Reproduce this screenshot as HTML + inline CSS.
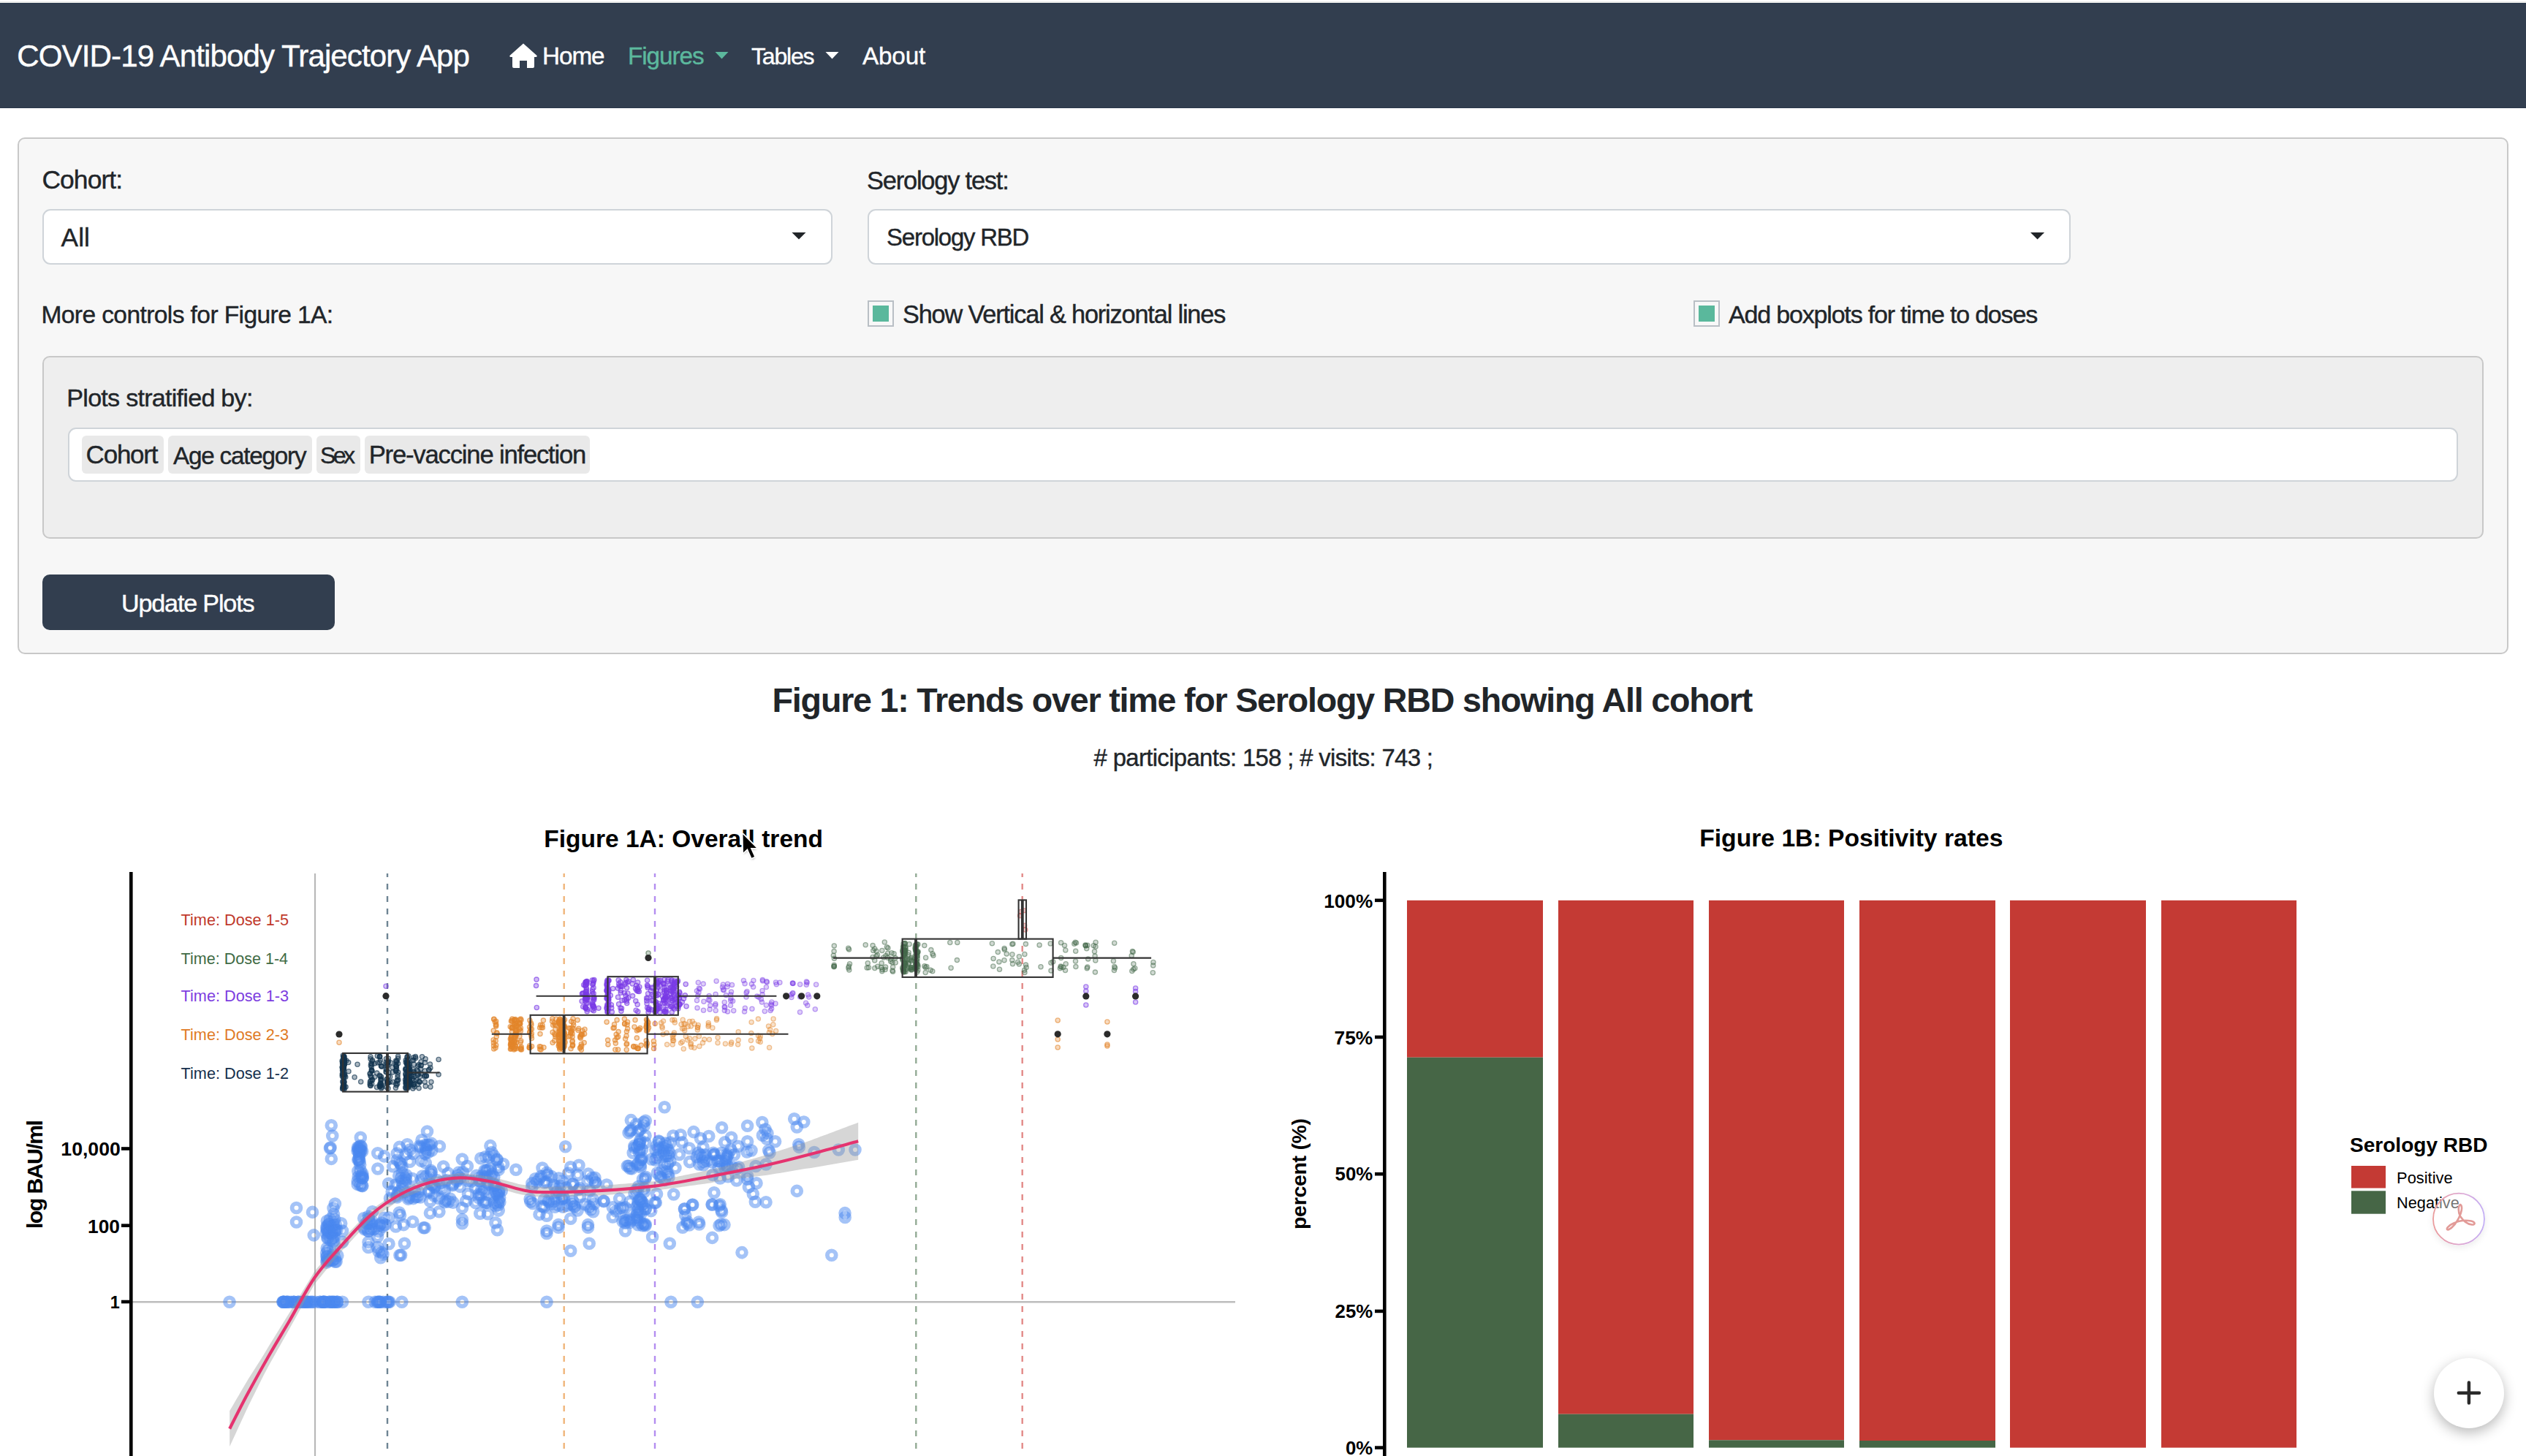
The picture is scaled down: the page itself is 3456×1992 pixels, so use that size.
<!DOCTYPE html>
<html><head><meta charset="utf-8">
<style>
html,body{margin:0;padding:0;}
body{width:3456px;height:1992px;overflow:hidden;background:#fff;position:relative;font-family:"Liberation Sans",sans-serif;}
.a{position:absolute;box-sizing:border-box;}
.t{position:absolute;white-space:nowrap;font-family:"Liberation Sans",sans-serif;}
</style></head><body>
<!-- top strip + navbar -->
<div class="a" style="left:0;top:2px;width:3456px;height:2px;background:#e8e9e7"></div>
<div class="a" style="left:0;top:4px;width:3456px;height:144px;background:#323e4f;border-top:1px solid #24354a;border-bottom:1px solid #2a364a"></div>
<svg class="a" style="left:696px;top:58px" width="40" height="36" viewBox="0 0 40 36">
  <path d="M20 1.5 L38.5 18 Q39.5 19.5 37.5 20 L35 20 L35 33 Q35 35 33 35 L25 35 L25 25 L15 25 L15 35 L7 35 Q5 35 5 33 L5 20 L2.5 20 Q0.5 19.5 1.5 18 Z" fill="#fff"/>
</svg>
<svg class="a" style="left:978px;top:70px" width="20" height="12"><path d="M0.5 1 L18.5 1 L9.5 10.5 Z" fill="#5cb89d"/></svg>
<svg class="a" style="left:1129px;top:70px" width="20" height="12"><path d="M0.5 1 L18.5 1 L9.5 10.5 Z" fill="#fff"/></svg>

<!-- panel -->
<div class="a" style="left:24px;top:188px;width:3408px;height:707px;background:#f7f7f7;border:2px solid #c8c8c8;border-radius:10px"></div>
<div class="a" style="left:58px;top:286px;width:1081px;height:76px;background:#fff;border:2px solid #cfd4d9;border-radius:11px"></div>
<svg class="a" style="left:1080px;top:316px" width="26" height="16"><path d="M3.4 2 L22.5 2 L13 11.6 Z" fill="#212529"/></svg>
<div class="a" style="left:1187px;top:286px;width:1646px;height:76px;background:#fff;border:2px solid #cfd4d9;border-radius:11px"></div>
<svg class="a" style="left:2775px;top:316px" width="26" height="16"><path d="M3 2 L22.1 2 L12.6 11.6 Z" fill="#212529"/></svg>
<div class="a" style="left:1187px;top:411px;width:36px;height:36px;border:2px solid #b9bfc5;background:#f8f8f8"></div>
<div class="a" style="left:1194px;top:418px;width:22px;height:22px;background:#5ab89c"></div>
<div class="a" style="left:2317px;top:411px;width:36px;height:36px;border:2px solid #b9bfc5;background:#f8f8f8"></div>
<div class="a" style="left:2324px;top:418px;width:22px;height:22px;background:#5ab89c"></div>
<div class="a" style="left:58px;top:487px;width:3340px;height:250px;background:#eeeeee;border:2px solid #c8c8c8;border-radius:10px"></div>
<div class="a" style="left:93px;top:585px;width:3270px;height:74px;background:#fff;border:2px solid #cfd4d9;border-radius:11px"></div>
<div class="a" style="left:112px;top:596px;width:112px;height:52px;background:#e9e9e9;border-radius:6px"></div>
<div class="a" style="left:230px;top:596px;width:197px;height:52px;background:#e9e9e9;border-radius:6px"></div>
<div class="a" style="left:433px;top:596px;width:60px;height:52px;background:#e9e9e9;border-radius:6px"></div>
<div class="a" style="left:499px;top:596px;width:308px;height:52px;background:#e9e9e9;border-radius:6px"></div>
<div class="a" style="left:58px;top:786px;width:400px;height:76px;background:#323e4f;border-radius:10px"></div>

<svg class="a" style="left:0;top:0" width="3456" height="1992">
<line x1="431" y1="1195" x2="431" y2="1992" stroke="#b9b9b9" stroke-width="2.2"/>
<line x1="181" y1="1781.3" x2="1690" y2="1781.3" stroke="#bdbdbd" stroke-width="2.5"/>
<line x1="530" y1="1195" x2="530" y2="1985" stroke="#6f8594" stroke-width="2.4" stroke-dasharray="8 9" stroke-dashoffset="3.0"/>
<line x1="771.7" y1="1195" x2="771.7" y2="1985" stroke="#f0b57a" stroke-width="2.4" stroke-dasharray="8 9" stroke-dashoffset="3.0"/>
<line x1="896" y1="1195" x2="896" y2="1985" stroke="#b48ef0" stroke-width="2.4" stroke-dasharray="8 9" stroke-dashoffset="3.0"/>
<line x1="1253.3" y1="1195" x2="1253.3" y2="1985" stroke="#93ab95" stroke-width="2.4" stroke-dasharray="8 9" stroke-dashoffset="3.0"/>
<line x1="1398.7" y1="1195" x2="1398.7" y2="1985" stroke="#e38a88" stroke-width="2.4" stroke-dasharray="8 9" stroke-dashoffset="3.0"/>
<g fill="none" stroke="#4a88f0" stroke-opacity="0.5" stroke-width="5.8">
<circle cx="314.0" cy="1781.3" r="5.9"/>
<circle cx="468.5" cy="1781.3" r="5.9"/>
<circle cx="504.0" cy="1781.3" r="5.9"/>
<circle cx="533.0" cy="1781.3" r="5.9"/>
<circle cx="549.8" cy="1781.3" r="5.9"/>
<circle cx="632.3" cy="1781.3" r="5.9"/>
<circle cx="748.0" cy="1781.3" r="5.9"/>
<circle cx="918.0" cy="1781.3" r="5.9"/>
<circle cx="954.3" cy="1781.3" r="5.9"/>
<circle cx="402.5" cy="1781.3" r="5.9"/>
<circle cx="420.2" cy="1781.3" r="5.9"/>
<circle cx="413.9" cy="1781.3" r="5.9"/>
<circle cx="388.1" cy="1781.3" r="5.9"/>
<circle cx="387.0" cy="1781.3" r="5.9"/>
<circle cx="388.8" cy="1781.3" r="5.9"/>
<circle cx="407.9" cy="1781.3" r="5.9"/>
<circle cx="391.7" cy="1781.3" r="5.9"/>
<circle cx="418.9" cy="1781.3" r="5.9"/>
<circle cx="416.2" cy="1781.3" r="5.9"/>
<circle cx="437.7" cy="1781.3" r="5.9"/>
<circle cx="431.4" cy="1781.3" r="5.9"/>
<circle cx="392.8" cy="1781.3" r="5.9"/>
<circle cx="401.7" cy="1781.3" r="5.9"/>
<circle cx="394.8" cy="1781.3" r="5.9"/>
<circle cx="419.5" cy="1781.3" r="5.9"/>
<circle cx="414.6" cy="1781.3" r="5.9"/>
<circle cx="388.2" cy="1781.3" r="5.9"/>
<circle cx="421.7" cy="1781.3" r="5.9"/>
<circle cx="402.0" cy="1781.3" r="5.9"/>
<circle cx="409.5" cy="1781.3" r="5.9"/>
<circle cx="427.9" cy="1781.3" r="5.9"/>
<circle cx="398.2" cy="1781.3" r="5.9"/>
<circle cx="413.4" cy="1781.3" r="5.9"/>
<circle cx="424.4" cy="1781.3" r="5.9"/>
<circle cx="437.9" cy="1781.3" r="5.9"/>
<circle cx="407.6" cy="1781.3" r="5.9"/>
<circle cx="393.2" cy="1781.3" r="5.9"/>
<circle cx="387.1" cy="1781.3" r="5.9"/>
<circle cx="426.3" cy="1781.3" r="5.9"/>
<circle cx="462.0" cy="1781.3" r="5.9"/>
<circle cx="457.7" cy="1781.3" r="5.9"/>
<circle cx="454.9" cy="1781.3" r="5.9"/>
<circle cx="461.2" cy="1781.3" r="5.9"/>
<circle cx="452.4" cy="1781.3" r="5.9"/>
<circle cx="442.5" cy="1781.3" r="5.9"/>
<circle cx="456.5" cy="1781.3" r="5.9"/>
<circle cx="460.7" cy="1781.3" r="5.9"/>
<circle cx="450.3" cy="1781.3" r="5.9"/>
<circle cx="441.5" cy="1781.3" r="5.9"/>
<circle cx="445.0" cy="1781.3" r="5.9"/>
<circle cx="442.4" cy="1781.3" r="5.9"/>
<circle cx="444.1" cy="1781.3" r="5.9"/>
<circle cx="450.4" cy="1781.3" r="5.9"/>
<circle cx="442.9" cy="1781.3" r="5.9"/>
<circle cx="454.2" cy="1781.3" r="5.9"/>
<circle cx="528.6" cy="1781.3" r="5.9"/>
<circle cx="518.3" cy="1781.3" r="5.9"/>
<circle cx="519.8" cy="1781.3" r="5.9"/>
<circle cx="531.2" cy="1781.3" r="5.9"/>
<circle cx="516.3" cy="1781.3" r="5.9"/>
<circle cx="517.4" cy="1781.3" r="5.9"/>
<circle cx="524.2" cy="1781.3" r="5.9"/>
<circle cx="513.1" cy="1781.3" r="5.9"/>
<circle cx="520.0" cy="1781.3" r="5.9"/>
<circle cx="531.1" cy="1781.3" r="5.9"/>
<circle cx="453.3" cy="1539.7" r="5.9"/>
<circle cx="454.8" cy="1554.0" r="5.9"/>
<circle cx="452.1" cy="1570.0" r="5.9"/>
<circle cx="451.5" cy="1571.0" r="5.9"/>
<circle cx="453.3" cy="1585.4" r="5.9"/>
<circle cx="493.3" cy="1556.3" r="5.9"/>
<circle cx="493.1" cy="1601.2" r="5.9"/>
<circle cx="494.4" cy="1569.1" r="5.9"/>
<circle cx="496.2" cy="1610.5" r="5.9"/>
<circle cx="496.0" cy="1611.5" r="5.9"/>
<circle cx="492.1" cy="1588.7" r="5.9"/>
<circle cx="489.8" cy="1602.2" r="5.9"/>
<circle cx="489.5" cy="1569.8" r="5.9"/>
<circle cx="490.7" cy="1575.3" r="5.9"/>
<circle cx="491.7" cy="1569.0" r="5.9"/>
<circle cx="489.0" cy="1574.6" r="5.9"/>
<circle cx="489.8" cy="1586.7" r="5.9"/>
<circle cx="489.2" cy="1615.8" r="5.9"/>
<circle cx="493.9" cy="1574.5" r="5.9"/>
<circle cx="491.0" cy="1585.8" r="5.9"/>
<circle cx="491.9" cy="1573.0" r="5.9"/>
<circle cx="495.8" cy="1622.6" r="5.9"/>
<circle cx="492.7" cy="1593.6" r="5.9"/>
<circle cx="489.7" cy="1571.8" r="5.9"/>
<circle cx="491.7" cy="1581.1" r="5.9"/>
<circle cx="495.6" cy="1575.2" r="5.9"/>
<circle cx="489.2" cy="1620.2" r="5.9"/>
<circle cx="493.2" cy="1574.4" r="5.9"/>
<circle cx="493.3" cy="1567.5" r="5.9"/>
<circle cx="493.2" cy="1621.8" r="5.9"/>
<circle cx="495.9" cy="1605.7" r="5.9"/>
<circle cx="491.1" cy="1586.9" r="5.9"/>
<circle cx="490.3" cy="1610.0" r="5.9"/>
<circle cx="493.3" cy="1610.4" r="5.9"/>
<circle cx="491.6" cy="1578.7" r="5.9"/>
<circle cx="495.5" cy="1622.1" r="5.9"/>
<circle cx="495.8" cy="1611.9" r="5.9"/>
<circle cx="495.5" cy="1608.2" r="5.9"/>
<circle cx="516.8" cy="1577.7" r="5.9"/>
<circle cx="516.8" cy="1599.0" r="5.9"/>
<circle cx="525.7" cy="1581.9" r="5.9"/>
<circle cx="531.7" cy="1619.3" r="5.9"/>
<circle cx="533.5" cy="1639.5" r="5.9"/>
<circle cx="584.5" cy="1548.0" r="5.9"/>
<circle cx="546.5" cy="1569.4" r="5.9"/>
<circle cx="557.2" cy="1565.8" r="5.9"/>
<circle cx="560.8" cy="1573.0" r="5.9"/>
<circle cx="575.0" cy="1569.4" r="5.9"/>
<circle cx="554.8" cy="1618.0" r="5.9"/>
<circle cx="543.0" cy="1636.0" r="5.9"/>
<circle cx="575.0" cy="1638.0" r="5.9"/>
<circle cx="548.7" cy="1611.7" r="5.9"/>
<circle cx="555.9" cy="1578.9" r="5.9"/>
<circle cx="537.6" cy="1595.7" r="5.9"/>
<circle cx="550.5" cy="1623.4" r="5.9"/>
<circle cx="589.6" cy="1607.0" r="5.9"/>
<circle cx="588.5" cy="1643.2" r="5.9"/>
<circle cx="589.5" cy="1601.4" r="5.9"/>
<circle cx="548.3" cy="1592.2" r="5.9"/>
<circle cx="547.0" cy="1590.7" r="5.9"/>
<circle cx="570.9" cy="1637.3" r="5.9"/>
<circle cx="583.1" cy="1609.1" r="5.9"/>
<circle cx="572.6" cy="1630.6" r="5.9"/>
<circle cx="540.7" cy="1621.3" r="5.9"/>
<circle cx="586.9" cy="1629.4" r="5.9"/>
<circle cx="578.0" cy="1609.0" r="5.9"/>
<circle cx="546.0" cy="1629.9" r="5.9"/>
<circle cx="554.6" cy="1630.7" r="5.9"/>
<circle cx="590.4" cy="1603.5" r="5.9"/>
<circle cx="558.5" cy="1640.4" r="5.9"/>
<circle cx="576.6" cy="1588.4" r="5.9"/>
<circle cx="543.1" cy="1587.1" r="5.9"/>
<circle cx="586.7" cy="1631.0" r="5.9"/>
<circle cx="544.2" cy="1632.4" r="5.9"/>
<circle cx="590.9" cy="1621.0" r="5.9"/>
<circle cx="555.6" cy="1613.8" r="5.9"/>
<circle cx="543.3" cy="1578.0" r="5.9"/>
<circle cx="590.4" cy="1620.5" r="5.9"/>
<circle cx="565.5" cy="1639.6" r="5.9"/>
<circle cx="560.3" cy="1635.4" r="5.9"/>
<circle cx="582.3" cy="1591.1" r="5.9"/>
<circle cx="550.1" cy="1596.6" r="5.9"/>
<circle cx="549.5" cy="1616.3" r="5.9"/>
<circle cx="550.5" cy="1605.1" r="5.9"/>
<circle cx="543.3" cy="1638.0" r="5.9"/>
<circle cx="555.8" cy="1607.7" r="5.9"/>
<circle cx="568.7" cy="1637.6" r="5.9"/>
<circle cx="559.6" cy="1638.5" r="5.9"/>
<circle cx="564.1" cy="1612.6" r="5.9"/>
<circle cx="565.3" cy="1578.3" r="5.9"/>
<circle cx="560.6" cy="1589.3" r="5.9"/>
<circle cx="536.2" cy="1630.5" r="5.9"/>
<circle cx="545.7" cy="1608.7" r="5.9"/>
<circle cx="576.6" cy="1614.3" r="5.9"/>
<circle cx="554.3" cy="1611.7" r="5.9"/>
<circle cx="567.1" cy="1629.5" r="5.9"/>
<circle cx="574.1" cy="1567.7" r="5.9"/>
<circle cx="577.0" cy="1559.8" r="5.9"/>
<circle cx="587.4" cy="1566.2" r="5.9"/>
<circle cx="583.2" cy="1573.3" r="5.9"/>
<circle cx="590.2" cy="1564.4" r="5.9"/>
<circle cx="584.3" cy="1566.2" r="5.9"/>
<circle cx="582.2" cy="1571.4" r="5.9"/>
<circle cx="581.0" cy="1566.9" r="5.9"/>
<circle cx="581.6" cy="1578.4" r="5.9"/>
<circle cx="586.0" cy="1576.5" r="5.9"/>
<circle cx="405.5" cy="1652.5" r="5.9"/>
<circle cx="405.5" cy="1672.0" r="5.9"/>
<circle cx="427.5" cy="1658.4" r="5.9"/>
<circle cx="429.3" cy="1689.9" r="5.9"/>
<circle cx="458.4" cy="1647.0" r="5.9"/>
<circle cx="456.0" cy="1653.0" r="5.9"/>
<circle cx="456.6" cy="1661.4" r="5.9"/>
<circle cx="461.1" cy="1682.8" r="5.9"/>
<circle cx="455.0" cy="1724.5" r="5.9"/>
<circle cx="459.4" cy="1675.4" r="5.9"/>
<circle cx="447.9" cy="1694.0" r="5.9"/>
<circle cx="447.2" cy="1681.7" r="5.9"/>
<circle cx="447.2" cy="1707.8" r="5.9"/>
<circle cx="458.5" cy="1721.7" r="5.9"/>
<circle cx="448.5" cy="1710.7" r="5.9"/>
<circle cx="456.6" cy="1675.7" r="5.9"/>
<circle cx="460.1" cy="1726.0" r="5.9"/>
<circle cx="449.5" cy="1725.1" r="5.9"/>
<circle cx="452.4" cy="1696.7" r="5.9"/>
<circle cx="461.8" cy="1717.8" r="5.9"/>
<circle cx="448.6" cy="1693.3" r="5.9"/>
<circle cx="454.2" cy="1687.7" r="5.9"/>
<circle cx="449.1" cy="1686.4" r="5.9"/>
<circle cx="457.6" cy="1668.2" r="5.9"/>
<circle cx="454.9" cy="1693.9" r="5.9"/>
<circle cx="446.3" cy="1687.2" r="5.9"/>
<circle cx="456.0" cy="1698.2" r="5.9"/>
<circle cx="447.0" cy="1727.1" r="5.9"/>
<circle cx="458.6" cy="1726.3" r="5.9"/>
<circle cx="447.7" cy="1683.2" r="5.9"/>
<circle cx="446.6" cy="1714.5" r="5.9"/>
<circle cx="450.3" cy="1674.9" r="5.9"/>
<circle cx="452.8" cy="1722.6" r="5.9"/>
<circle cx="459.1" cy="1682.8" r="5.9"/>
<circle cx="448.4" cy="1723.1" r="5.9"/>
<circle cx="455.1" cy="1709.7" r="5.9"/>
<circle cx="447.4" cy="1670.5" r="5.9"/>
<circle cx="457.0" cy="1692.9" r="5.9"/>
<circle cx="447.2" cy="1724.2" r="5.9"/>
<circle cx="456.2" cy="1715.9" r="5.9"/>
<circle cx="447.3" cy="1719.2" r="5.9"/>
<circle cx="447.1" cy="1719.6" r="5.9"/>
<circle cx="453.3" cy="1687.7" r="5.9"/>
<circle cx="454.8" cy="1723.5" r="5.9"/>
<circle cx="450.3" cy="1674.9" r="5.9"/>
<circle cx="454.4" cy="1681.5" r="5.9"/>
<circle cx="447.8" cy="1676.8" r="5.9"/>
<circle cx="446.8" cy="1679.3" r="5.9"/>
<circle cx="451.0" cy="1685.6" r="5.9"/>
<circle cx="458.2" cy="1684.7" r="5.9"/>
<circle cx="454.0" cy="1677.9" r="5.9"/>
<circle cx="451.6" cy="1668.1" r="5.9"/>
<circle cx="466.7" cy="1673.8" r="5.9"/>
<circle cx="468.5" cy="1684.0" r="5.9"/>
<circle cx="468.5" cy="1699.4" r="5.9"/>
<circle cx="509.5" cy="1657.8" r="5.9"/>
<circle cx="504.0" cy="1664.3" r="5.9"/>
<circle cx="519.5" cy="1675.6" r="5.9"/>
<circle cx="502.1" cy="1674.0" r="5.9"/>
<circle cx="525.9" cy="1666.2" r="5.9"/>
<circle cx="522.2" cy="1673.1" r="5.9"/>
<circle cx="511.8" cy="1681.5" r="5.9"/>
<circle cx="508.6" cy="1674.6" r="5.9"/>
<circle cx="518.0" cy="1684.6" r="5.9"/>
<circle cx="507.0" cy="1681.5" r="5.9"/>
<circle cx="518.6" cy="1677.4" r="5.9"/>
<circle cx="509.0" cy="1671.3" r="5.9"/>
<circle cx="497.7" cy="1666.7" r="5.9"/>
<circle cx="498.3" cy="1679.6" r="5.9"/>
<circle cx="504.2" cy="1667.4" r="5.9"/>
<circle cx="498.7" cy="1681.7" r="5.9"/>
<circle cx="523.9" cy="1678.1" r="5.9"/>
<circle cx="505.0" cy="1669.1" r="5.9"/>
<circle cx="505.4" cy="1673.6" r="5.9"/>
<circle cx="501.0" cy="1673.4" r="5.9"/>
<circle cx="504.4" cy="1684.2" r="5.9"/>
<circle cx="527.1" cy="1675.5" r="5.9"/>
<circle cx="503.8" cy="1684.3" r="5.9"/>
<circle cx="516.6" cy="1692.0" r="5.9"/>
<circle cx="504.0" cy="1699.4" r="5.9"/>
<circle cx="504.0" cy="1706.5" r="5.9"/>
<circle cx="516.6" cy="1706.5" r="5.9"/>
<circle cx="522.5" cy="1713.6" r="5.9"/>
<circle cx="520.7" cy="1720.8" r="5.9"/>
<circle cx="532.0" cy="1701.8" r="5.9"/>
<circle cx="532.0" cy="1666.0" r="5.9"/>
<circle cx="524.0" cy="1716.0" r="5.9"/>
<circle cx="518.0" cy="1712.0" r="5.9"/>
<circle cx="546.3" cy="1659.0" r="5.9"/>
<circle cx="547.5" cy="1662.6" r="5.9"/>
<circle cx="541.5" cy="1678.0" r="5.9"/>
<circle cx="552.2" cy="1675.6" r="5.9"/>
<circle cx="564.7" cy="1671.5" r="5.9"/>
<circle cx="579.5" cy="1679.8" r="5.9"/>
<circle cx="553.4" cy="1701.2" r="5.9"/>
<circle cx="548.6" cy="1717.2" r="5.9"/>
<circle cx="546.9" cy="1717.2" r="5.9"/>
<circle cx="588.4" cy="1659.6" r="5.9"/>
<circle cx="600.9" cy="1657.8" r="5.9"/>
<circle cx="632.4" cy="1652.5" r="5.9"/>
<circle cx="632.4" cy="1668.5" r="5.9"/>
<circle cx="632.4" cy="1673.8" r="5.9"/>
<circle cx="656.7" cy="1660.2" r="5.9"/>
<circle cx="667.4" cy="1660.8" r="5.9"/>
<circle cx="678.0" cy="1673.0" r="5.9"/>
<circle cx="680.4" cy="1682.8" r="5.9"/>
<circle cx="581.2" cy="1679.8" r="5.9"/>
<circle cx="601.4" cy="1568.2" r="5.9"/>
<circle cx="590.7" cy="1574.0" r="5.9"/>
<circle cx="632.3" cy="1586.0" r="5.9"/>
<circle cx="639.4" cy="1595.5" r="5.9"/>
<circle cx="657.8" cy="1584.8" r="5.9"/>
<circle cx="670.9" cy="1567.6" r="5.9"/>
<circle cx="672.6" cy="1576.5" r="5.9"/>
<circle cx="606.7" cy="1596.0" r="5.9"/>
<circle cx="671.0" cy="1608.5" r="5.9"/>
<circle cx="663.0" cy="1610.4" r="5.9"/>
<circle cx="675.3" cy="1619.7" r="5.9"/>
<circle cx="668.2" cy="1619.9" r="5.9"/>
<circle cx="663.1" cy="1601.3" r="5.9"/>
<circle cx="665.3" cy="1611.8" r="5.9"/>
<circle cx="664.1" cy="1582.7" r="5.9"/>
<circle cx="670.9" cy="1598.9" r="5.9"/>
<circle cx="678.2" cy="1621.7" r="5.9"/>
<circle cx="682.5" cy="1631.6" r="5.9"/>
<circle cx="681.6" cy="1648.7" r="5.9"/>
<circle cx="673.1" cy="1606.1" r="5.9"/>
<circle cx="688.6" cy="1592.5" r="5.9"/>
<circle cx="681.8" cy="1630.5" r="5.9"/>
<circle cx="664.1" cy="1645.3" r="5.9"/>
<circle cx="686.2" cy="1629.3" r="5.9"/>
<circle cx="682.1" cy="1643.5" r="5.9"/>
<circle cx="666.6" cy="1621.3" r="5.9"/>
<circle cx="676.1" cy="1645.3" r="5.9"/>
<circle cx="683.9" cy="1644.6" r="5.9"/>
<circle cx="678.2" cy="1649.7" r="5.9"/>
<circle cx="680.8" cy="1634.4" r="5.9"/>
<circle cx="669.0" cy="1583.4" r="5.9"/>
<circle cx="666.5" cy="1608.8" r="5.9"/>
<circle cx="665.7" cy="1645.4" r="5.9"/>
<circle cx="677.5" cy="1629.3" r="5.9"/>
<circle cx="679.3" cy="1633.4" r="5.9"/>
<circle cx="675.7" cy="1581.3" r="5.9"/>
<circle cx="683.7" cy="1638.6" r="5.9"/>
<circle cx="676.1" cy="1622.2" r="5.9"/>
<circle cx="680.1" cy="1586.1" r="5.9"/>
<circle cx="682.2" cy="1600.4" r="5.9"/>
<circle cx="664.9" cy="1601.4" r="5.9"/>
<circle cx="682.0" cy="1596.8" r="5.9"/>
<circle cx="682.2" cy="1656.1" r="5.9"/>
<circle cx="675.8" cy="1610.5" r="5.9"/>
<circle cx="675.5" cy="1633.6" r="5.9"/>
<circle cx="682.9" cy="1628.5" r="5.9"/>
<circle cx="679.7" cy="1587.0" r="5.9"/>
<circle cx="666.8" cy="1600.6" r="5.9"/>
<circle cx="645.3" cy="1616.4" r="5.9"/>
<circle cx="633.2" cy="1603.5" r="5.9"/>
<circle cx="598.2" cy="1614.8" r="5.9"/>
<circle cx="640.4" cy="1633.5" r="5.9"/>
<circle cx="640.6" cy="1615.8" r="5.9"/>
<circle cx="629.6" cy="1623.4" r="5.9"/>
<circle cx="626.2" cy="1608.2" r="5.9"/>
<circle cx="655.7" cy="1611.8" r="5.9"/>
<circle cx="661.5" cy="1644.2" r="5.9"/>
<circle cx="595.2" cy="1623.2" r="5.9"/>
<circle cx="650.6" cy="1645.6" r="5.9"/>
<circle cx="625.0" cy="1614.8" r="5.9"/>
<circle cx="608.5" cy="1644.6" r="5.9"/>
<circle cx="608.5" cy="1628.6" r="5.9"/>
<circle cx="603.8" cy="1626.1" r="5.9"/>
<circle cx="659.7" cy="1608.8" r="5.9"/>
<circle cx="650.6" cy="1625.4" r="5.9"/>
<circle cx="655.2" cy="1633.9" r="5.9"/>
<circle cx="610.0" cy="1642.5" r="5.9"/>
<circle cx="627.5" cy="1604.1" r="5.9"/>
<circle cx="594.2" cy="1624.6" r="5.9"/>
<circle cx="625.1" cy="1616.3" r="5.9"/>
<circle cx="603.7" cy="1618.1" r="5.9"/>
<circle cx="615.8" cy="1640.0" r="5.9"/>
<circle cx="594.1" cy="1636.0" r="5.9"/>
<circle cx="651.9" cy="1608.3" r="5.9"/>
<circle cx="657.9" cy="1634.4" r="5.9"/>
<circle cx="656.2" cy="1615.8" r="5.9"/>
<circle cx="619.7" cy="1620.3" r="5.9"/>
<circle cx="662.9" cy="1628.9" r="5.9"/>
<circle cx="618.9" cy="1621.8" r="5.9"/>
<circle cx="613.0" cy="1605.1" r="5.9"/>
<circle cx="601.0" cy="1639.7" r="5.9"/>
<circle cx="613.7" cy="1644.2" r="5.9"/>
<circle cx="611.2" cy="1614.7" r="5.9"/>
<circle cx="629.3" cy="1611.4" r="5.9"/>
<circle cx="619.8" cy="1645.1" r="5.9"/>
<circle cx="655.0" cy="1638.7" r="5.9"/>
<circle cx="637.5" cy="1643.2" r="5.9"/>
<circle cx="658.9" cy="1627.2" r="5.9"/>
<circle cx="705.9" cy="1600.3" r="5.9"/>
<circle cx="742.0" cy="1598.0" r="5.9"/>
<circle cx="748.0" cy="1604.4" r="5.9"/>
<circle cx="727.9" cy="1624.0" r="5.9"/>
<circle cx="773.6" cy="1568.8" r="5.9"/>
<circle cx="780.7" cy="1596.7" r="5.9"/>
<circle cx="792.0" cy="1594.3" r="5.9"/>
<circle cx="790.4" cy="1607.5" r="5.9"/>
<circle cx="791.6" cy="1627.5" r="5.9"/>
<circle cx="793.5" cy="1637.2" r="5.9"/>
<circle cx="749.2" cy="1607.4" r="5.9"/>
<circle cx="810.0" cy="1611.4" r="5.9"/>
<circle cx="766.9" cy="1622.2" r="5.9"/>
<circle cx="750.3" cy="1642.0" r="5.9"/>
<circle cx="814.7" cy="1618.0" r="5.9"/>
<circle cx="784.3" cy="1620.0" r="5.9"/>
<circle cx="774.9" cy="1624.7" r="5.9"/>
<circle cx="737.9" cy="1613.1" r="5.9"/>
<circle cx="741.7" cy="1650.3" r="5.9"/>
<circle cx="769.2" cy="1616.0" r="5.9"/>
<circle cx="808.1" cy="1654.8" r="5.9"/>
<circle cx="764.7" cy="1612.0" r="5.9"/>
<circle cx="740.3" cy="1609.5" r="5.9"/>
<circle cx="754.5" cy="1609.6" r="5.9"/>
<circle cx="744.7" cy="1617.9" r="5.9"/>
<circle cx="776.1" cy="1649.4" r="5.9"/>
<circle cx="793.2" cy="1625.6" r="5.9"/>
<circle cx="761.3" cy="1631.2" r="5.9"/>
<circle cx="757.8" cy="1621.9" r="5.9"/>
<circle cx="727.9" cy="1618.9" r="5.9"/>
<circle cx="813.9" cy="1611.3" r="5.9"/>
<circle cx="769.8" cy="1636.5" r="5.9"/>
<circle cx="804.0" cy="1615.8" r="5.9"/>
<circle cx="747.7" cy="1617.4" r="5.9"/>
<circle cx="760.0" cy="1627.3" r="5.9"/>
<circle cx="812.6" cy="1647.4" r="5.9"/>
<circle cx="804.9" cy="1606.1" r="5.9"/>
<circle cx="725.1" cy="1640.5" r="5.9"/>
<circle cx="807.1" cy="1628.7" r="5.9"/>
<circle cx="777.8" cy="1605.0" r="5.9"/>
<circle cx="759.2" cy="1651.3" r="5.9"/>
<circle cx="800.4" cy="1647.8" r="5.9"/>
<circle cx="814.4" cy="1617.4" r="5.9"/>
<circle cx="732.4" cy="1612.7" r="5.9"/>
<circle cx="771.6" cy="1639.1" r="5.9"/>
<circle cx="811.4" cy="1641.1" r="5.9"/>
<circle cx="783.5" cy="1643.2" r="5.9"/>
<circle cx="765.4" cy="1632.6" r="5.9"/>
<circle cx="725.8" cy="1644.1" r="5.9"/>
<circle cx="744.1" cy="1651.0" r="5.9"/>
<circle cx="783.3" cy="1620.2" r="5.9"/>
<circle cx="734.2" cy="1617.6" r="5.9"/>
<circle cx="770.2" cy="1651.2" r="5.9"/>
<circle cx="744.5" cy="1641.1" r="5.9"/>
<circle cx="764.7" cy="1649.3" r="5.9"/>
<circle cx="758.0" cy="1643.6" r="5.9"/>
<circle cx="768.5" cy="1640.2" r="5.9"/>
<circle cx="753.8" cy="1647.4" r="5.9"/>
<circle cx="786.0" cy="1650.3" r="5.9"/>
<circle cx="782.3" cy="1647.6" r="5.9"/>
<circle cx="750.5" cy="1644.0" r="5.9"/>
<circle cx="786.1" cy="1651.3" r="5.9"/>
<circle cx="830.0" cy="1621.0" r="5.9"/>
<circle cx="826.0" cy="1643.0" r="5.9"/>
<circle cx="863.3" cy="1532.6" r="5.9"/>
<circle cx="863.8" cy="1545.9" r="5.9"/>
<circle cx="868.0" cy="1632.7" r="5.9"/>
<circle cx="866.2" cy="1577.2" r="5.9"/>
<circle cx="871.7" cy="1666.0" r="5.9"/>
<circle cx="862.0" cy="1547.5" r="5.9"/>
<circle cx="864.4" cy="1598.9" r="5.9"/>
<circle cx="872.0" cy="1569.3" r="5.9"/>
<circle cx="874.5" cy="1641.3" r="5.9"/>
<circle cx="868.1" cy="1570.3" r="5.9"/>
<circle cx="878.3" cy="1584.5" r="5.9"/>
<circle cx="875.0" cy="1573.7" r="5.9"/>
<circle cx="861.9" cy="1644.1" r="5.9"/>
<circle cx="863.5" cy="1669.6" r="5.9"/>
<circle cx="867.9" cy="1567.9" r="5.9"/>
<circle cx="861.9" cy="1598.5" r="5.9"/>
<circle cx="871.6" cy="1669.2" r="5.9"/>
<circle cx="860.2" cy="1595.3" r="5.9"/>
<circle cx="861.7" cy="1672.6" r="5.9"/>
<circle cx="860.1" cy="1549.9" r="5.9"/>
<circle cx="858.3" cy="1595.3" r="5.9"/>
<circle cx="876.8" cy="1660.5" r="5.9"/>
<circle cx="873.1" cy="1675.7" r="5.9"/>
<circle cx="877.5" cy="1586.8" r="5.9"/>
<circle cx="861.1" cy="1667.5" r="5.9"/>
<circle cx="873.4" cy="1547.2" r="5.9"/>
<circle cx="871.6" cy="1593.4" r="5.9"/>
<circle cx="729.0" cy="1646.5" r="5.9"/>
<circle cx="738.0" cy="1661.4" r="5.9"/>
<circle cx="748.0" cy="1663.2" r="5.9"/>
<circle cx="748.0" cy="1684.0" r="5.9"/>
<circle cx="748.0" cy="1687.5" r="5.9"/>
<circle cx="764.0" cy="1675.6" r="5.9"/>
<circle cx="764.0" cy="1679.2" r="5.9"/>
<circle cx="780.7" cy="1667.3" r="5.9"/>
<circle cx="790.2" cy="1656.0" r="5.9"/>
<circle cx="804.5" cy="1675.6" r="5.9"/>
<circle cx="804.5" cy="1679.2" r="5.9"/>
<circle cx="806.2" cy="1650.7" r="5.9"/>
<circle cx="811.6" cy="1657.8" r="5.9"/>
<circle cx="826.0" cy="1643.6" r="5.9"/>
<circle cx="838.3" cy="1651.9" r="5.9"/>
<circle cx="838.3" cy="1665.0" r="5.9"/>
<circle cx="852.0" cy="1671.0" r="5.9"/>
<circle cx="855.5" cy="1684.0" r="5.9"/>
<circle cx="879.3" cy="1676.8" r="5.9"/>
<circle cx="780.7" cy="1711.3" r="5.9"/>
<circle cx="806.2" cy="1701.2" r="5.9"/>
<circle cx="855.6" cy="1651.9" r="5.9"/>
<circle cx="847.6" cy="1640.1" r="5.9"/>
<circle cx="851.9" cy="1652.7" r="5.9"/>
<circle cx="878.3" cy="1644.5" r="5.9"/>
<circle cx="878.6" cy="1647.5" r="5.9"/>
<circle cx="854.9" cy="1669.6" r="5.9"/>
<circle cx="873.1" cy="1655.6" r="5.9"/>
<circle cx="842.9" cy="1657.0" r="5.9"/>
<circle cx="855.5" cy="1673.1" r="5.9"/>
<circle cx="848.5" cy="1653.1" r="5.9"/>
<circle cx="876.0" cy="1641.1" r="5.9"/>
<circle cx="857.0" cy="1669.2" r="5.9"/>
<circle cx="909.2" cy="1514.8" r="5.9"/>
<circle cx="880.7" cy="1535.3" r="5.9"/>
<circle cx="870.5" cy="1538.1" r="5.9"/>
<circle cx="882.9" cy="1563.4" r="5.9"/>
<circle cx="880.5" cy="1646.8" r="5.9"/>
<circle cx="874.7" cy="1565.4" r="5.9"/>
<circle cx="883.4" cy="1610.2" r="5.9"/>
<circle cx="873.7" cy="1623.2" r="5.9"/>
<circle cx="874.4" cy="1565.8" r="5.9"/>
<circle cx="870.1" cy="1628.2" r="5.9"/>
<circle cx="882.8" cy="1612.4" r="5.9"/>
<circle cx="883.2" cy="1533.2" r="5.9"/>
<circle cx="873.3" cy="1591.8" r="5.9"/>
<circle cx="883.4" cy="1654.0" r="5.9"/>
<circle cx="875.4" cy="1562.6" r="5.9"/>
<circle cx="876.0" cy="1594.2" r="5.9"/>
<circle cx="883.0" cy="1553.8" r="5.9"/>
<circle cx="881.2" cy="1626.0" r="5.9"/>
<circle cx="881.5" cy="1630.5" r="5.9"/>
<circle cx="878.5" cy="1572.6" r="5.9"/>
<circle cx="874.5" cy="1577.0" r="5.9"/>
<circle cx="881.0" cy="1540.3" r="5.9"/>
<circle cx="872.8" cy="1627.9" r="5.9"/>
<circle cx="901.3" cy="1561.0" r="5.9"/>
<circle cx="896.7" cy="1587.1" r="5.9"/>
<circle cx="903.0" cy="1609.9" r="5.9"/>
<circle cx="915.0" cy="1610.3" r="5.9"/>
<circle cx="901.7" cy="1562.0" r="5.9"/>
<circle cx="898.1" cy="1584.2" r="5.9"/>
<circle cx="911.3" cy="1581.4" r="5.9"/>
<circle cx="901.0" cy="1579.8" r="5.9"/>
<circle cx="909.3" cy="1593.6" r="5.9"/>
<circle cx="912.1" cy="1602.8" r="5.9"/>
<circle cx="910.3" cy="1564.0" r="5.9"/>
<circle cx="914.1" cy="1573.2" r="5.9"/>
<circle cx="908.2" cy="1577.5" r="5.9"/>
<circle cx="911.9" cy="1568.2" r="5.9"/>
<circle cx="901.3" cy="1570.6" r="5.9"/>
<circle cx="899.3" cy="1604.8" r="5.9"/>
<circle cx="908.4" cy="1575.0" r="5.9"/>
<circle cx="904.5" cy="1610.6" r="5.9"/>
<circle cx="906.9" cy="1569.9" r="5.9"/>
<circle cx="913.4" cy="1592.5" r="5.9"/>
<circle cx="917.3" cy="1563.0" r="5.9"/>
<circle cx="906.2" cy="1601.3" r="5.9"/>
<circle cx="914.1" cy="1606.4" r="5.9"/>
<circle cx="896.9" cy="1573.2" r="5.9"/>
<circle cx="898.6" cy="1567.6" r="5.9"/>
<circle cx="916.9" cy="1588.7" r="5.9"/>
<circle cx="916.0" cy="1577.4" r="5.9"/>
<circle cx="914.6" cy="1581.5" r="5.9"/>
<circle cx="876.0" cy="1545.6" r="5.9"/>
<circle cx="876.0" cy="1560.0" r="5.9"/>
<circle cx="876.5" cy="1587.0" r="5.9"/>
<circle cx="876.5" cy="1596.7" r="5.9"/>
<circle cx="879.5" cy="1613.3" r="5.9"/>
<circle cx="891.4" cy="1586.0" r="5.9"/>
<circle cx="909.2" cy="1614.5" r="5.9"/>
<circle cx="921.7" cy="1634.0" r="5.9"/>
<circle cx="898.5" cy="1633.5" r="5.9"/>
<circle cx="897.3" cy="1645.4" r="5.9"/>
<circle cx="921.0" cy="1554.0" r="5.9"/>
<circle cx="931.2" cy="1552.8" r="5.9"/>
<circle cx="933.0" cy="1562.9" r="5.9"/>
<circle cx="949.0" cy="1548.6" r="5.9"/>
<circle cx="958.5" cy="1557.5" r="5.9"/>
<circle cx="969.8" cy="1554.5" r="5.9"/>
<circle cx="943.0" cy="1571.0" r="5.9"/>
<circle cx="929.4" cy="1579.5" r="5.9"/>
<circle cx="943.6" cy="1589.6" r="5.9"/>
<circle cx="924.0" cy="1597.9" r="5.9"/>
<circle cx="956.7" cy="1593.0" r="5.9"/>
<circle cx="962.0" cy="1569.4" r="5.9"/>
<circle cx="962.4" cy="1593.7" r="5.9"/>
<circle cx="987.0" cy="1577.5" r="5.9"/>
<circle cx="974.5" cy="1589.9" r="5.9"/>
<circle cx="960.8" cy="1583.8" r="5.9"/>
<circle cx="958.1" cy="1579.9" r="5.9"/>
<circle cx="962.2" cy="1589.4" r="5.9"/>
<circle cx="976.5" cy="1579.9" r="5.9"/>
<circle cx="953.4" cy="1582.9" r="5.9"/>
<circle cx="977.4" cy="1579.4" r="5.9"/>
<circle cx="964.2" cy="1579.9" r="5.9"/>
<circle cx="981.6" cy="1588.2" r="5.9"/>
<circle cx="955.3" cy="1577.4" r="5.9"/>
<circle cx="967.2" cy="1588.2" r="5.9"/>
<circle cx="976.0" cy="1577.2" r="5.9"/>
<circle cx="987.6" cy="1542.7" r="5.9"/>
<circle cx="1022.6" cy="1540.3" r="5.9"/>
<circle cx="1042.8" cy="1535.5" r="5.9"/>
<circle cx="1050.0" cy="1550.4" r="5.9"/>
<circle cx="1043.4" cy="1553.3" r="5.9"/>
<circle cx="1060.6" cy="1561.7" r="5.9"/>
<circle cx="1022.6" cy="1561.7" r="5.9"/>
<circle cx="1000.6" cy="1556.3" r="5.9"/>
<circle cx="991.7" cy="1562.9" r="5.9"/>
<circle cx="1010.0" cy="1568.2" r="5.9"/>
<circle cx="1028.0" cy="1574.0" r="5.9"/>
<circle cx="1022.0" cy="1576.0" r="5.9"/>
<circle cx="1000.0" cy="1573.0" r="5.9"/>
<circle cx="1051.7" cy="1574.0" r="5.9"/>
<circle cx="1053.0" cy="1577.0" r="5.9"/>
<circle cx="1047.0" cy="1545.0" r="5.9"/>
<circle cx="1049.0" cy="1558.0" r="5.9"/>
<circle cx="987.8" cy="1591.7" r="5.9"/>
<circle cx="995.1" cy="1581.8" r="5.9"/>
<circle cx="992.1" cy="1597.9" r="5.9"/>
<circle cx="992.2" cy="1588.6" r="5.9"/>
<circle cx="993.5" cy="1585.0" r="5.9"/>
<circle cx="1008.5" cy="1598.9" r="5.9"/>
<circle cx="993.7" cy="1579.7" r="5.9"/>
<circle cx="1004.5" cy="1579.9" r="5.9"/>
<circle cx="983.2" cy="1596.6" r="5.9"/>
<circle cx="995.5" cy="1594.7" r="5.9"/>
<circle cx="995.0" cy="1596.2" r="5.9"/>
<circle cx="996.6" cy="1578.9" r="5.9"/>
<circle cx="983.4" cy="1588.2" r="5.9"/>
<circle cx="1001.9" cy="1596.8" r="5.9"/>
<circle cx="1086.7" cy="1530.8" r="5.9"/>
<circle cx="1099.8" cy="1535.0" r="5.9"/>
<circle cx="1090.3" cy="1542.0" r="5.9"/>
<circle cx="1092.7" cy="1565.8" r="5.9"/>
<circle cx="1093.3" cy="1569.4" r="5.9"/>
<circle cx="1114.0" cy="1576.5" r="5.9"/>
<circle cx="1147.3" cy="1573.0" r="5.9"/>
<circle cx="1170.0" cy="1573.0" r="5.9"/>
<circle cx="1034.0" cy="1595.5" r="5.9"/>
<circle cx="1048.0" cy="1593.0" r="5.9"/>
<circle cx="1010.7" cy="1596.7" r="5.9"/>
<circle cx="975.0" cy="1607.4" r="5.9"/>
<circle cx="985.2" cy="1612.0" r="5.9"/>
<circle cx="996.0" cy="1609.8" r="5.9"/>
<circle cx="1007.8" cy="1615.0" r="5.9"/>
<circle cx="1022.6" cy="1608.6" r="5.9"/>
<circle cx="1022.6" cy="1613.3" r="5.9"/>
<circle cx="1035.0" cy="1618.7" r="5.9"/>
<circle cx="1024.4" cy="1624.0" r="5.9"/>
<circle cx="1030.3" cy="1633.5" r="5.9"/>
<circle cx="1033.3" cy="1644.2" r="5.9"/>
<circle cx="1048.0" cy="1644.8" r="5.9"/>
<circle cx="977.0" cy="1631.7" r="5.9"/>
<circle cx="974.0" cy="1647.8" r="5.9"/>
<circle cx="985.2" cy="1647.8" r="5.9"/>
<circle cx="987.0" cy="1656.0" r="5.9"/>
<circle cx="947.2" cy="1648.4" r="5.9"/>
<circle cx="936.5" cy="1653.7" r="5.9"/>
<circle cx="1090.3" cy="1629.4" r="5.9"/>
<circle cx="1156.0" cy="1659.6" r="5.9"/>
<circle cx="896.0" cy="1645.3" r="5.9"/>
<circle cx="890.8" cy="1656.6" r="5.9"/>
<circle cx="883.0" cy="1676.8" r="5.9"/>
<circle cx="892.6" cy="1692.3" r="5.9"/>
<circle cx="916.3" cy="1701.2" r="5.9"/>
<circle cx="936.5" cy="1654.3" r="5.9"/>
<circle cx="937.7" cy="1662.6" r="5.9"/>
<circle cx="940.0" cy="1673.8" r="5.9"/>
<circle cx="934.0" cy="1679.2" r="5.9"/>
<circle cx="956.7" cy="1675.0" r="5.9"/>
<circle cx="947.8" cy="1648.3" r="5.9"/>
<circle cx="974.5" cy="1648.3" r="5.9"/>
<circle cx="984.0" cy="1649.5" r="5.9"/>
<circle cx="987.6" cy="1658.4" r="5.9"/>
<circle cx="986.4" cy="1675.0" r="5.9"/>
<circle cx="991.0" cy="1675.6" r="5.9"/>
<circle cx="984.0" cy="1676.8" r="5.9"/>
<circle cx="974.5" cy="1693.4" r="5.9"/>
<circle cx="1015.0" cy="1713.6" r="5.9"/>
<circle cx="1156.2" cy="1665.5" r="5.9"/>
<circle cx="1137.8" cy="1717.2" r="5.9"/>
<circle cx="940.0" cy="1671.0" r="5.9"/>
<circle cx="943.0" cy="1676.0" r="5.9"/>
<circle cx="956.0" cy="1672.0" r="5.9"/>
<circle cx="871.2" cy="1662.4" r="5.9"/>
<circle cx="875.2" cy="1658.2" r="5.9"/>
<circle cx="872.0" cy="1650.2" r="5.9"/>
<circle cx="877.3" cy="1673.3" r="5.9"/>
<circle cx="871.5" cy="1657.7" r="5.9"/>
<circle cx="881.3" cy="1674.8" r="5.9"/>
<circle cx="872.8" cy="1644.6" r="5.9"/>
<circle cx="883.2" cy="1675.1" r="5.9"/>
<circle cx="876.8" cy="1641.9" r="5.9"/>
<circle cx="883.0" cy="1654.0" r="5.9"/>
</g>
<path d="M314.2,1930.3 L318.5,1923.0 L322.8,1915.6 L327.1,1908.2 L331.4,1900.8 L335.7,1893.4 L340.0,1886.2 L344.3,1879.5 L348.6,1872.7 L352.9,1866.0 L357.2,1859.2 L361.5,1852.2 L365.8,1844.9 L370.1,1837.8 L374.4,1830.9 L378.7,1823.9 L383.0,1817.0 L387.3,1810.1 L391.6,1803.1 L395.9,1796.2 L400.2,1789.2 L404.5,1782.2 L408.8,1775.1 L413.1,1768.1 L417.4,1761.1 L421.7,1754.0 L426.0,1746.7 L430.3,1739.4 L434.6,1734.3 L438.9,1729.3 L443.2,1724.3 L447.5,1719.2 L451.8,1714.2 L456.1,1709.2 L460.4,1704.1 L464.7,1699.1 L469.0,1694.6 L473.3,1690.2 L477.6,1685.8 L481.9,1681.4 L486.2,1677.0 L490.5,1672.5 L494.8,1668.1 L499.1,1663.7 L503.4,1659.3 L507.7,1655.1 L512.0,1652.2 L516.3,1649.2 L520.6,1646.2 L524.9,1643.2 L529.2,1640.2 L533.5,1637.2 L537.8,1634.2 L542.1,1631.3 L546.4,1628.3 L550.7,1626.1 L555.0,1624.4 L559.3,1622.7 L563.6,1621.0 L567.9,1619.3 L572.2,1617.6 L576.5,1615.9 L580.8,1614.2 L585.1,1612.5 L589.4,1610.9 L593.7,1610.3 L598.0,1609.6 L602.3,1609.0 L606.6,1608.3 L610.9,1607.7 L615.2,1607.0 L619.5,1606.4 L623.8,1605.7 L628.1,1605.0 L632.4,1605.0 L636.7,1605.5 L641.0,1606.0 L645.3,1606.5 L649.6,1607.1 L653.9,1607.6 L658.2,1608.1 L662.5,1608.7 L666.8,1609.2 L671.1,1609.7 L675.4,1610.8 L679.7,1611.9 L684.0,1613.1 L688.3,1614.2 L692.6,1615.3 L696.9,1616.5 L701.2,1617.6 L705.5,1618.7 L709.8,1619.9 L714.1,1620.8 L718.4,1621.3 L722.7,1621.8 L727.0,1622.3 L731.3,1622.9 L735.6,1623.4 L739.9,1623.9 L744.2,1623.9 L748.5,1623.8 L752.8,1623.7 L757.1,1623.6 L761.4,1623.5 L765.7,1623.4 L770.0,1623.3 L774.3,1623.2 L778.6,1623.1 L782.9,1623.0 L787.2,1622.9 L791.5,1622.8 L795.8,1622.7 L800.1,1622.6 L804.4,1622.5 L808.7,1622.4 L813.0,1622.3 L817.3,1622.2 L821.6,1622.1 L825.9,1621.9 L830.2,1621.5 L834.5,1621.1 L838.8,1620.8 L843.1,1620.4 L847.4,1620.1 L851.7,1619.7 L856.0,1619.4 L860.3,1619.0 L864.6,1618.7 L868.9,1618.3 L873.2,1617.9 L877.5,1617.6 L881.8,1617.2 L886.1,1616.9 L890.4,1616.5 L894.7,1616.2 L899.0,1615.5 L903.3,1614.7 L907.6,1613.8 L911.9,1612.9 L916.2,1612.0 L920.5,1611.1 L924.8,1610.2 L929.1,1609.3 L933.4,1608.4 L937.7,1607.6 L942.0,1606.7 L946.3,1605.8 L950.6,1604.9 L954.9,1604.0 L959.2,1603.1 L963.5,1602.2 L967.8,1601.3 L972.1,1600.3 L976.4,1599.3 L980.7,1598.3 L985.0,1597.3 L989.3,1596.3 L993.6,1595.2 L997.9,1594.2 L1002.2,1593.1 L1006.5,1591.9 L1010.8,1590.7 L1015.1,1589.5 L1019.4,1588.3 L1023.7,1587.1 L1028.0,1585.9 L1032.3,1584.7 L1036.6,1583.5 L1040.9,1582.3 L1045.2,1581.0 L1049.5,1579.8 L1053.8,1578.5 L1058.1,1577.0 L1062.4,1575.6 L1066.7,1574.2 L1071.0,1572.8 L1075.3,1571.4 L1079.6,1570.0 L1083.9,1568.6 L1088.2,1567.2 L1092.5,1565.7 L1096.8,1564.3 L1101.1,1562.9 L1105.4,1561.4 L1109.7,1559.9 L1114.0,1558.3 L1118.3,1556.7 L1122.6,1555.1 L1126.9,1553.5 L1131.2,1551.9 L1135.5,1550.3 L1139.8,1548.7 L1144.1,1547.1 L1148.4,1545.4 L1152.7,1543.8 L1157.0,1542.2 L1161.3,1540.6 L1165.6,1539.0 L1169.9,1537.4 L1174.2,1535.8 L1174.2,1586.8 L1169.9,1587.6 L1165.6,1588.3 L1161.3,1589.0 L1157.0,1589.8 L1152.7,1590.5 L1148.4,1591.3 L1144.1,1592.0 L1139.8,1592.7 L1135.5,1593.5 L1131.2,1594.2 L1126.9,1595.0 L1122.6,1595.7 L1118.3,1596.4 L1114.0,1597.2 L1109.7,1597.9 L1105.4,1598.5 L1101.1,1599.1 L1096.8,1599.8 L1092.5,1600.5 L1088.2,1601.3 L1083.9,1602.0 L1079.6,1602.7 L1075.3,1603.4 L1071.0,1604.2 L1066.7,1604.9 L1062.4,1605.6 L1058.1,1606.3 L1053.8,1607.1 L1049.5,1607.8 L1045.2,1608.3 L1040.9,1608.8 L1036.6,1609.3 L1032.3,1609.8 L1028.0,1610.4 L1023.7,1610.9 L1019.4,1611.4 L1015.1,1611.9 L1010.8,1612.4 L1006.5,1613.0 L1002.2,1613.5 L997.9,1614.1 L993.6,1614.8 L989.3,1615.5 L985.0,1616.2 L980.7,1616.9 L976.4,1617.6 L972.1,1618.4 L967.8,1619.1 L963.5,1619.7 L959.2,1620.3 L954.9,1620.8 L950.6,1621.4 L946.3,1622.0 L942.0,1622.6 L937.7,1623.2 L933.4,1623.8 L929.1,1624.4 L924.8,1625.0 L920.5,1625.6 L916.2,1626.1 L911.9,1626.7 L907.6,1627.3 L903.3,1627.9 L899.0,1628.5 L894.7,1629.2 L890.4,1629.6 L886.1,1630.0 L881.8,1630.4 L877.5,1630.7 L873.2,1631.1 L868.9,1631.5 L864.6,1631.9 L860.3,1632.3 L856.0,1632.7 L851.7,1633.0 L847.4,1633.4 L843.1,1633.8 L838.8,1634.2 L834.5,1634.6 L830.2,1635.0 L825.9,1635.3 L821.6,1635.6 L817.3,1635.7 L813.0,1635.9 L808.7,1636.0 L804.4,1636.1 L800.1,1636.3 L795.8,1636.4 L791.5,1636.5 L787.2,1636.6 L782.9,1636.8 L778.6,1636.9 L774.3,1637.0 L770.0,1637.2 L765.7,1637.3 L761.4,1637.4 L757.1,1637.5 L752.8,1637.7 L748.5,1637.8 L744.2,1637.9 L739.9,1637.8 L735.6,1637.3 L731.3,1636.7 L727.0,1636.2 L722.7,1635.6 L718.4,1635.1 L714.1,1634.6 L709.8,1633.6 L705.5,1632.4 L701.2,1631.3 L696.9,1630.1 L692.6,1628.9 L688.3,1627.8 L684.0,1626.6 L679.7,1625.5 L675.4,1624.3 L671.1,1623.2 L666.8,1622.6 L662.5,1622.1 L658.2,1621.5 L653.9,1621.0 L649.6,1620.4 L645.3,1619.8 L641.0,1619.3 L636.7,1618.7 L632.4,1618.2 L628.1,1618.2 L623.8,1618.9 L619.5,1619.5 L615.2,1620.1 L610.9,1620.7 L606.6,1621.4 L602.3,1622.0 L598.0,1622.7 L593.7,1623.3 L589.4,1624.0 L585.1,1625.6 L580.8,1627.4 L576.5,1629.1 L572.2,1630.9 L567.9,1632.6 L563.6,1634.4 L559.3,1636.1 L555.0,1637.9 L550.7,1639.6 L546.4,1641.8 L542.1,1644.8 L537.8,1647.9 L533.5,1650.9 L529.2,1653.9 L524.9,1657.0 L520.6,1660.0 L516.3,1663.0 L512.0,1666.0 L507.7,1669.1 L503.4,1673.2 L499.1,1677.8 L494.8,1682.4 L490.5,1687.0 L486.2,1691.6 L481.9,1696.3 L477.6,1700.9 L473.3,1705.5 L469.0,1710.1 L464.7,1714.8 L460.4,1720.1 L456.1,1725.3 L451.8,1730.6 L447.5,1735.9 L443.2,1741.1 L438.9,1746.4 L434.6,1751.6 L430.3,1756.9 L426.0,1764.4 L421.7,1771.9 L417.4,1779.5 L413.1,1787.3 L408.8,1795.0 L404.5,1802.8 L400.2,1810.5 L395.9,1818.2 L391.6,1825.9 L387.3,1833.5 L383.0,1841.2 L378.7,1848.8 L374.4,1856.5 L370.1,1864.1 L365.8,1871.9 L361.5,1880.0 L357.2,1888.5 L352.9,1897.2 L348.6,1905.9 L344.3,1914.6 L340.0,1923.3 L335.7,1932.4 L331.4,1941.7 L327.1,1951.0 L322.8,1960.4 L318.5,1969.7 L314.2,1979.1 Z" fill="#999999" fill-opacity="0.4"/>
<path d="M314.2,1954.7 C318.2,1946.9 329.3,1924.5 338.2,1908.0 C347.1,1891.5 357.6,1872.7 367.3,1855.7 C377.0,1838.7 386.0,1824.2 396.5,1806.2 C407.0,1788.2 418.9,1764.7 430.4,1748.0 C441.9,1731.3 452.8,1720.2 465.5,1706.0 C478.2,1691.8 493.0,1674.8 506.7,1662.8 C520.4,1650.8 534.2,1641.5 547.9,1634.0 C561.6,1626.5 575.3,1621.3 589.0,1617.5 C602.7,1613.7 616.5,1611.5 630.3,1611.3 C644.0,1611.1 657.8,1613.8 671.5,1616.5 C685.2,1619.2 701.1,1625.1 712.7,1627.5 C724.3,1629.9 722.5,1630.8 741.0,1631.0 C759.5,1631.2 797.8,1630.2 823.6,1628.8 C849.4,1627.4 871.7,1625.7 895.7,1622.6 C919.7,1619.5 942.1,1615.0 967.8,1610.2 C993.5,1605.4 1026.0,1599.0 1050.0,1593.7 C1074.0,1588.4 1091.3,1583.7 1112.0,1578.3 C1132.7,1572.9 1163.8,1564.1 1174.2,1561.3" fill="none" stroke="#e5336f" stroke-width="4.2" stroke-linecap="butt"/>
<g fill="#12344f" fill-opacity="0.35" stroke="#12344f" stroke-opacity="0.65" stroke-width="1.3">
<circle cx="471.5" cy="1472.5" r="3.1"/>
<circle cx="471.2" cy="1451.4" r="3.1"/>
<circle cx="471.0" cy="1454.2" r="3.1"/>
<circle cx="469.7" cy="1482.9" r="3.1"/>
<circle cx="471.2" cy="1452.4" r="3.1"/>
<circle cx="469.0" cy="1462.4" r="3.1"/>
<circle cx="470.1" cy="1461.6" r="3.1"/>
<circle cx="468.6" cy="1455.4" r="3.1"/>
<circle cx="470.8" cy="1485.3" r="3.1"/>
<circle cx="468.3" cy="1469.9" r="3.1"/>
<circle cx="470.9" cy="1445.8" r="3.1"/>
<circle cx="471.2" cy="1449.4" r="3.1"/>
<circle cx="470.4" cy="1469.3" r="3.1"/>
<circle cx="470.5" cy="1458.1" r="3.1"/>
<circle cx="469.7" cy="1470.8" r="3.1"/>
<circle cx="469.7" cy="1474.3" r="3.1"/>
<circle cx="469.8" cy="1464.2" r="3.1"/>
<circle cx="468.3" cy="1472.5" r="3.1"/>
<circle cx="470.0" cy="1454.8" r="3.1"/>
<circle cx="470.9" cy="1479.9" r="3.1"/>
<circle cx="469.8" cy="1452.3" r="3.1"/>
<circle cx="469.9" cy="1448.9" r="3.1"/>
<circle cx="468.7" cy="1463.8" r="3.1"/>
<circle cx="468.5" cy="1464.3" r="3.1"/>
<circle cx="470.0" cy="1445.9" r="3.1"/>
<circle cx="470.5" cy="1447.8" r="3.1"/>
<circle cx="470.8" cy="1479.8" r="3.1"/>
<circle cx="470.0" cy="1446.5" r="3.1"/>
<circle cx="470.0" cy="1461.4" r="3.1"/>
<circle cx="471.6" cy="1450.3" r="3.1"/>
<circle cx="471.3" cy="1489.8" r="3.1"/>
<circle cx="470.8" cy="1481.5" r="3.1"/>
<circle cx="468.9" cy="1489.2" r="3.1"/>
<circle cx="470.0" cy="1488.0" r="3.1"/>
<circle cx="471.5" cy="1451.6" r="3.1"/>
<circle cx="471.0" cy="1486.8" r="3.1"/>
<circle cx="468.4" cy="1460.1" r="3.1"/>
<circle cx="470.9" cy="1451.3" r="3.1"/>
<circle cx="471.4" cy="1456.6" r="3.1"/>
<circle cx="471.1" cy="1450.6" r="3.1"/>
<circle cx="470.0" cy="1486.3" r="3.1"/>
<circle cx="468.9" cy="1456.1" r="3.1"/>
<circle cx="470.0" cy="1458.7" r="3.1"/>
<circle cx="468.3" cy="1452.4" r="3.1"/>
<circle cx="468.8" cy="1487.1" r="3.1"/>
<circle cx="470.6" cy="1485.2" r="3.1"/>
<circle cx="468.8" cy="1480.1" r="3.1"/>
<circle cx="468.6" cy="1468.4" r="3.1"/>
<circle cx="470.5" cy="1460.5" r="3.1"/>
<circle cx="471.3" cy="1469.5" r="3.1"/>
<circle cx="470.3" cy="1484.6" r="3.1"/>
<circle cx="468.6" cy="1489.7" r="3.1"/>
<circle cx="470.5" cy="1462.1" r="3.1"/>
<circle cx="471.1" cy="1456.2" r="3.1"/>
<circle cx="471.8" cy="1470.6" r="3.1"/>
<circle cx="469.5" cy="1479.2" r="3.1"/>
<circle cx="469.8" cy="1452.1" r="3.1"/>
<circle cx="470.9" cy="1446.2" r="3.1"/>
<circle cx="471.2" cy="1455.7" r="3.1"/>
<circle cx="470.5" cy="1489.3" r="3.1"/>
<circle cx="470.3" cy="1474.5" r="3.1"/>
<circle cx="469.3" cy="1444.1" r="3.1"/>
<circle cx="468.3" cy="1450.9" r="3.1"/>
<circle cx="470.4" cy="1463.9" r="3.1"/>
<circle cx="470.0" cy="1485.2" r="3.1"/>
<circle cx="468.7" cy="1454.5" r="3.1"/>
<circle cx="470.6" cy="1445.0" r="3.1"/>
<circle cx="468.2" cy="1460.3" r="3.1"/>
<circle cx="468.6" cy="1460.4" r="3.1"/>
<circle cx="469.0" cy="1470.8" r="3.1"/>
<circle cx="476.7" cy="1453.4" r="3.1"/>
<circle cx="477.0" cy="1465.8" r="3.1"/>
<circle cx="473.1" cy="1487.1" r="3.1"/>
<circle cx="473.9" cy="1450.9" r="3.1"/>
<circle cx="472.8" cy="1473.4" r="3.1"/>
<circle cx="493.7" cy="1480.0" r="3.1"/>
<circle cx="489.0" cy="1456.2" r="3.1"/>
<circle cx="485.1" cy="1473.7" r="3.1"/>
<circle cx="508.2" cy="1460.1" r="3.1"/>
<circle cx="508.5" cy="1464.4" r="3.1"/>
<circle cx="509.6" cy="1477.7" r="3.1"/>
<circle cx="507.1" cy="1485.6" r="3.1"/>
<circle cx="506.4" cy="1468.5" r="3.1"/>
<circle cx="507.7" cy="1454.9" r="3.1"/>
<circle cx="506.4" cy="1479.8" r="3.1"/>
<circle cx="506.2" cy="1469.3" r="3.1"/>
<circle cx="509.6" cy="1450.5" r="3.1"/>
<circle cx="506.9" cy="1472.0" r="3.1"/>
<circle cx="508.0" cy="1473.5" r="3.1"/>
<circle cx="509.1" cy="1452.0" r="3.1"/>
<circle cx="507.3" cy="1457.8" r="3.1"/>
<circle cx="506.4" cy="1484.9" r="3.1"/>
<circle cx="509.0" cy="1476.9" r="3.1"/>
<circle cx="506.2" cy="1482.8" r="3.1"/>
<circle cx="508.9" cy="1465.4" r="3.1"/>
<circle cx="508.9" cy="1464.8" r="3.1"/>
<circle cx="507.0" cy="1448.8" r="3.1"/>
<circle cx="507.0" cy="1445.8" r="3.1"/>
<circle cx="507.4" cy="1478.5" r="3.1"/>
<circle cx="508.7" cy="1482.9" r="3.1"/>
<circle cx="508.8" cy="1456.2" r="3.1"/>
<circle cx="508.2" cy="1464.1" r="3.1"/>
<circle cx="515.7" cy="1468.1" r="3.1"/>
<circle cx="512.6" cy="1473.5" r="3.1"/>
<circle cx="516.8" cy="1454.0" r="3.1"/>
<circle cx="516.3" cy="1444.7" r="3.1"/>
<circle cx="512.6" cy="1454.9" r="3.1"/>
<circle cx="515.5" cy="1487.5" r="3.1"/>
<circle cx="521.9" cy="1459.0" r="3.1"/>
<circle cx="522.4" cy="1459.1" r="3.1"/>
<circle cx="520.1" cy="1485.7" r="3.1"/>
<circle cx="521.5" cy="1475.9" r="3.1"/>
<circle cx="521.6" cy="1489.0" r="3.1"/>
<circle cx="520.9" cy="1482.6" r="3.1"/>
<circle cx="521.7" cy="1483.4" r="3.1"/>
<circle cx="520.8" cy="1477.3" r="3.1"/>
<circle cx="521.3" cy="1458.2" r="3.1"/>
<circle cx="520.0" cy="1472.6" r="3.1"/>
<circle cx="519.5" cy="1485.9" r="3.1"/>
<circle cx="519.7" cy="1445.2" r="3.1"/>
<circle cx="519.6" cy="1486.7" r="3.1"/>
<circle cx="520.4" cy="1450.5" r="3.1"/>
<circle cx="519.3" cy="1445.9" r="3.1"/>
<circle cx="521.7" cy="1473.2" r="3.1"/>
<circle cx="521.7" cy="1477.9" r="3.1"/>
<circle cx="519.4" cy="1471.2" r="3.1"/>
<circle cx="520.5" cy="1481.6" r="3.1"/>
<circle cx="522.2" cy="1485.0" r="3.1"/>
<circle cx="519.4" cy="1483.9" r="3.1"/>
<circle cx="522.5" cy="1487.4" r="3.1"/>
<circle cx="519.6" cy="1453.5" r="3.1"/>
<circle cx="519.6" cy="1445.6" r="3.1"/>
<circle cx="531.4" cy="1481.4" r="3.1"/>
<circle cx="530.5" cy="1482.0" r="3.1"/>
<circle cx="530.5" cy="1457.2" r="3.1"/>
<circle cx="528.4" cy="1448.5" r="3.1"/>
<circle cx="531.0" cy="1453.4" r="3.1"/>
<circle cx="529.3" cy="1463.5" r="3.1"/>
<circle cx="528.1" cy="1455.8" r="3.1"/>
<circle cx="529.1" cy="1476.9" r="3.1"/>
<circle cx="529.5" cy="1458.8" r="3.1"/>
<circle cx="531.9" cy="1467.2" r="3.1"/>
<circle cx="531.4" cy="1472.4" r="3.1"/>
<circle cx="528.1" cy="1463.0" r="3.1"/>
<circle cx="529.7" cy="1479.6" r="3.1"/>
<circle cx="529.4" cy="1476.4" r="3.1"/>
<circle cx="530.2" cy="1454.0" r="3.1"/>
<circle cx="531.4" cy="1448.2" r="3.1"/>
<circle cx="531.3" cy="1451.8" r="3.1"/>
<circle cx="528.0" cy="1453.3" r="3.1"/>
<circle cx="531.0" cy="1489.0" r="3.1"/>
<circle cx="528.0" cy="1466.6" r="3.1"/>
<circle cx="530.0" cy="1480.7" r="3.1"/>
<circle cx="528.7" cy="1466.8" r="3.1"/>
<circle cx="529.4" cy="1482.3" r="3.1"/>
<circle cx="529.0" cy="1487.4" r="3.1"/>
<circle cx="534.7" cy="1453.9" r="3.1"/>
<circle cx="537.2" cy="1466.9" r="3.1"/>
<circle cx="533.7" cy="1473.3" r="3.1"/>
<circle cx="533.5" cy="1480.2" r="3.1"/>
<circle cx="537.2" cy="1480.2" r="3.1"/>
<circle cx="536.8" cy="1460.4" r="3.1"/>
<circle cx="542.6" cy="1462.2" r="3.1"/>
<circle cx="544.6" cy="1448.0" r="3.1"/>
<circle cx="544.6" cy="1445.2" r="3.1"/>
<circle cx="541.8" cy="1456.1" r="3.1"/>
<circle cx="544.6" cy="1467.1" r="3.1"/>
<circle cx="542.5" cy="1484.7" r="3.1"/>
<circle cx="541.9" cy="1465.2" r="3.1"/>
<circle cx="543.1" cy="1478.7" r="3.1"/>
<circle cx="544.0" cy="1473.7" r="3.1"/>
<circle cx="542.4" cy="1459.0" r="3.1"/>
<circle cx="541.6" cy="1482.8" r="3.1"/>
<circle cx="543.6" cy="1478.1" r="3.1"/>
<circle cx="541.7" cy="1464.2" r="3.1"/>
<circle cx="544.1" cy="1470.6" r="3.1"/>
<circle cx="541.5" cy="1465.3" r="3.1"/>
<circle cx="544.5" cy="1454.9" r="3.1"/>
<circle cx="541.8" cy="1457.9" r="3.1"/>
<circle cx="543.8" cy="1482.8" r="3.1"/>
<circle cx="541.6" cy="1451.2" r="3.1"/>
<circle cx="542.0" cy="1459.0" r="3.1"/>
<circle cx="543.1" cy="1451.4" r="3.1"/>
<circle cx="542.3" cy="1452.7" r="3.1"/>
<circle cx="544.9" cy="1477.5" r="3.1"/>
<circle cx="541.4" cy="1488.3" r="3.1"/>
<circle cx="555.2" cy="1461.7" r="3.1"/>
<circle cx="561.4" cy="1480.6" r="3.1"/>
<circle cx="559.6" cy="1464.0" r="3.1"/>
<circle cx="555.9" cy="1473.3" r="3.1"/>
<circle cx="555.2" cy="1453.5" r="3.1"/>
<circle cx="557.2" cy="1445.6" r="3.1"/>
<circle cx="557.3" cy="1480.4" r="3.1"/>
<circle cx="559.4" cy="1467.0" r="3.1"/>
<circle cx="558.9" cy="1465.3" r="3.1"/>
<circle cx="555.5" cy="1471.8" r="3.1"/>
<circle cx="557.3" cy="1478.1" r="3.1"/>
<circle cx="560.9" cy="1463.8" r="3.1"/>
<circle cx="558.5" cy="1478.5" r="3.1"/>
<circle cx="557.4" cy="1454.5" r="3.1"/>
<circle cx="559.6" cy="1484.5" r="3.1"/>
<circle cx="559.9" cy="1476.2" r="3.1"/>
<circle cx="560.5" cy="1475.3" r="3.1"/>
<circle cx="559.0" cy="1464.9" r="3.1"/>
<circle cx="556.7" cy="1472.9" r="3.1"/>
<circle cx="555.2" cy="1463.3" r="3.1"/>
<circle cx="560.0" cy="1476.8" r="3.1"/>
<circle cx="558.9" cy="1455.5" r="3.1"/>
<circle cx="557.5" cy="1464.9" r="3.1"/>
<circle cx="558.9" cy="1462.8" r="3.1"/>
<circle cx="559.2" cy="1486.8" r="3.1"/>
<circle cx="555.8" cy="1474.1" r="3.1"/>
<circle cx="559.9" cy="1461.9" r="3.1"/>
<circle cx="557.9" cy="1488.8" r="3.1"/>
<circle cx="554.8" cy="1469.0" r="3.1"/>
<circle cx="555.6" cy="1480.0" r="3.1"/>
<circle cx="561.1" cy="1467.9" r="3.1"/>
<circle cx="555.2" cy="1470.4" r="3.1"/>
<circle cx="558.3" cy="1477.0" r="3.1"/>
<circle cx="558.1" cy="1473.4" r="3.1"/>
<circle cx="560.3" cy="1468.0" r="3.1"/>
<circle cx="557.4" cy="1487.6" r="3.1"/>
<circle cx="556.0" cy="1475.5" r="3.1"/>
<circle cx="557.2" cy="1479.1" r="3.1"/>
<circle cx="555.4" cy="1489.3" r="3.1"/>
<circle cx="557.0" cy="1446.6" r="3.1"/>
<circle cx="556.4" cy="1462.4" r="3.1"/>
<circle cx="554.6" cy="1463.3" r="3.1"/>
<circle cx="557.4" cy="1476.1" r="3.1"/>
<circle cx="557.0" cy="1456.2" r="3.1"/>
<circle cx="556.1" cy="1478.1" r="3.1"/>
<circle cx="561.1" cy="1468.2" r="3.1"/>
<circle cx="556.0" cy="1480.9" r="3.1"/>
<circle cx="557.2" cy="1453.8" r="3.1"/>
<circle cx="555.4" cy="1479.7" r="3.1"/>
<circle cx="560.2" cy="1473.2" r="3.1"/>
<circle cx="557.8" cy="1469.9" r="3.1"/>
<circle cx="556.1" cy="1488.3" r="3.1"/>
<circle cx="557.0" cy="1473.4" r="3.1"/>
<circle cx="560.2" cy="1481.5" r="3.1"/>
<circle cx="557.8" cy="1457.5" r="3.1"/>
<circle cx="558.3" cy="1449.8" r="3.1"/>
<circle cx="560.3" cy="1460.3" r="3.1"/>
<circle cx="560.5" cy="1456.3" r="3.1"/>
<circle cx="557.1" cy="1455.7" r="3.1"/>
<circle cx="557.5" cy="1452.6" r="3.1"/>
<circle cx="554.5" cy="1477.2" r="3.1"/>
<circle cx="556.5" cy="1455.3" r="3.1"/>
<circle cx="556.6" cy="1466.1" r="3.1"/>
<circle cx="557.5" cy="1473.3" r="3.1"/>
<circle cx="559.1" cy="1460.7" r="3.1"/>
<circle cx="561.0" cy="1483.3" r="3.1"/>
<circle cx="554.9" cy="1482.1" r="3.1"/>
<circle cx="560.8" cy="1480.1" r="3.1"/>
<circle cx="555.5" cy="1482.2" r="3.1"/>
<circle cx="558.9" cy="1444.7" r="3.1"/>
<circle cx="554.6" cy="1487.8" r="3.1"/>
<circle cx="559.1" cy="1455.5" r="3.1"/>
<circle cx="555.2" cy="1450.6" r="3.1"/>
<circle cx="556.1" cy="1479.7" r="3.1"/>
<circle cx="556.9" cy="1451.0" r="3.1"/>
<circle cx="560.8" cy="1480.4" r="3.1"/>
<circle cx="555.7" cy="1485.0" r="3.1"/>
<circle cx="558.8" cy="1479.9" r="3.1"/>
<circle cx="559.2" cy="1485.1" r="3.1"/>
<circle cx="560.0" cy="1482.6" r="3.1"/>
<circle cx="564.2" cy="1475.9" r="3.1"/>
<circle cx="566.2" cy="1478.1" r="3.1"/>
<circle cx="565.6" cy="1484.6" r="3.1"/>
<circle cx="566.3" cy="1456.2" r="3.1"/>
<circle cx="564.4" cy="1450.4" r="3.1"/>
<circle cx="566.0" cy="1446.7" r="3.1"/>
<circle cx="565.8" cy="1450.6" r="3.1"/>
<circle cx="565.9" cy="1466.9" r="3.1"/>
<circle cx="566.2" cy="1483.7" r="3.1"/>
<circle cx="563.0" cy="1482.7" r="3.1"/>
<circle cx="565.8" cy="1469.9" r="3.1"/>
<circle cx="567.0" cy="1482.7" r="3.1"/>
<circle cx="565.2" cy="1463.3" r="3.1"/>
<circle cx="568.8" cy="1447.5" r="3.1"/>
<circle cx="566.8" cy="1473.3" r="3.1"/>
<circle cx="563.2" cy="1472.0" r="3.1"/>
<circle cx="567.1" cy="1486.8" r="3.1"/>
<circle cx="565.0" cy="1489.2" r="3.1"/>
<circle cx="566.1" cy="1466.3" r="3.1"/>
<circle cx="568.4" cy="1445.6" r="3.1"/>
<circle cx="574.7" cy="1472.8" r="3.1"/>
<circle cx="571.7" cy="1483.6" r="3.1"/>
<circle cx="571.9" cy="1465.8" r="3.1"/>
<circle cx="573.2" cy="1479.4" r="3.1"/>
<circle cx="570.7" cy="1464.0" r="3.1"/>
<circle cx="572.4" cy="1469.5" r="3.1"/>
<circle cx="575.6" cy="1457.5" r="3.1"/>
<circle cx="575.6" cy="1462.6" r="3.1"/>
<circle cx="573.0" cy="1456.5" r="3.1"/>
<circle cx="573.1" cy="1488.8" r="3.1"/>
<circle cx="574.2" cy="1480.4" r="3.1"/>
<circle cx="571.6" cy="1458.6" r="3.1"/>
<circle cx="571.4" cy="1471.0" r="3.1"/>
<circle cx="574.1" cy="1480.1" r="3.1"/>
<circle cx="569.3" cy="1477.2" r="3.1"/>
<circle cx="576.1" cy="1469.1" r="3.1"/>
<circle cx="576.4" cy="1457.8" r="3.1"/>
<circle cx="576.0" cy="1452.7" r="3.1"/>
<circle cx="583.4" cy="1472.0" r="3.1"/>
<circle cx="581.3" cy="1480.3" r="3.1"/>
<circle cx="583.3" cy="1472.1" r="3.1"/>
<circle cx="580.9" cy="1472.8" r="3.1"/>
<circle cx="581.6" cy="1471.4" r="3.1"/>
<circle cx="581.4" cy="1453.8" r="3.1"/>
<circle cx="581.3" cy="1465.1" r="3.1"/>
<circle cx="582.1" cy="1448.7" r="3.1"/>
<circle cx="577.5" cy="1445.7" r="3.1"/>
<circle cx="582.2" cy="1486.0" r="3.1"/>
<circle cx="588.9" cy="1461.0" r="3.1"/>
<circle cx="589.9" cy="1480.2" r="3.1"/>
<circle cx="588.4" cy="1455.9" r="3.1"/>
<circle cx="586.8" cy="1463.4" r="3.1"/>
<circle cx="586.9" cy="1463.8" r="3.1"/>
<circle cx="588.9" cy="1487.0" r="3.1"/>
<circle cx="600.1" cy="1470.1" r="3.1"/>
<circle cx="600.1" cy="1449.5" r="3.1"/>
</g>
<g fill="#e3862b" fill-opacity="0.35" stroke="#e3862b" stroke-opacity="0.65" stroke-width="1.3">
<circle cx="679.2" cy="1418.2" r="3.1"/>
<circle cx="679.7" cy="1412.7" r="3.1"/>
<circle cx="675.2" cy="1410.1" r="3.1"/>
<circle cx="678.1" cy="1433.6" r="3.1"/>
<circle cx="680.0" cy="1413.9" r="3.1"/>
<circle cx="677.2" cy="1398.0" r="3.1"/>
<circle cx="678.3" cy="1402.7" r="3.1"/>
<circle cx="675.9" cy="1394.3" r="3.1"/>
<circle cx="675.1" cy="1422.8" r="3.1"/>
<circle cx="675.7" cy="1434.9" r="3.1"/>
<circle cx="675.5" cy="1430.7" r="3.1"/>
<circle cx="675.7" cy="1394.4" r="3.1"/>
<circle cx="678.7" cy="1403.9" r="3.1"/>
<circle cx="678.8" cy="1401.6" r="3.1"/>
<circle cx="675.4" cy="1426.7" r="3.1"/>
<circle cx="678.7" cy="1430.1" r="3.1"/>
<circle cx="678.7" cy="1397.2" r="3.1"/>
<circle cx="678.2" cy="1423.9" r="3.1"/>
<circle cx="699.9" cy="1433.4" r="3.1"/>
<circle cx="699.1" cy="1434.8" r="3.1"/>
<circle cx="700.8" cy="1394.1" r="3.1"/>
<circle cx="698.3" cy="1421.4" r="3.1"/>
<circle cx="701.1" cy="1397.0" r="3.1"/>
<circle cx="699.3" cy="1424.7" r="3.1"/>
<circle cx="698.8" cy="1430.4" r="3.1"/>
<circle cx="700.0" cy="1396.2" r="3.1"/>
<circle cx="699.5" cy="1418.2" r="3.1"/>
<circle cx="699.8" cy="1422.5" r="3.1"/>
<circle cx="698.7" cy="1427.6" r="3.1"/>
<circle cx="699.5" cy="1421.1" r="3.1"/>
<circle cx="700.5" cy="1411.4" r="3.1"/>
<circle cx="699.6" cy="1427.2" r="3.1"/>
<circle cx="701.6" cy="1427.1" r="3.1"/>
<circle cx="700.2" cy="1406.1" r="3.1"/>
<circle cx="698.4" cy="1435.2" r="3.1"/>
<circle cx="700.7" cy="1428.9" r="3.1"/>
<circle cx="699.4" cy="1419.5" r="3.1"/>
<circle cx="701.7" cy="1429.1" r="3.1"/>
<circle cx="700.4" cy="1406.8" r="3.1"/>
<circle cx="699.7" cy="1431.5" r="3.1"/>
<circle cx="699.6" cy="1422.8" r="3.1"/>
<circle cx="700.4" cy="1431.9" r="3.1"/>
<circle cx="701.1" cy="1405.7" r="3.1"/>
<circle cx="698.2" cy="1404.8" r="3.1"/>
<circle cx="699.7" cy="1418.6" r="3.1"/>
<circle cx="701.1" cy="1431.5" r="3.1"/>
<circle cx="698.4" cy="1429.2" r="3.1"/>
<circle cx="701.1" cy="1430.6" r="3.1"/>
<circle cx="700.3" cy="1405.3" r="3.1"/>
<circle cx="701.3" cy="1428.1" r="3.1"/>
<circle cx="700.7" cy="1432.6" r="3.1"/>
<circle cx="699.4" cy="1397.2" r="3.1"/>
<circle cx="700.2" cy="1427.6" r="3.1"/>
<circle cx="703.9" cy="1425.6" r="3.1"/>
<circle cx="706.6" cy="1403.6" r="3.1"/>
<circle cx="705.4" cy="1422.5" r="3.1"/>
<circle cx="704.9" cy="1402.4" r="3.1"/>
<circle cx="704.1" cy="1425.7" r="3.1"/>
<circle cx="706.0" cy="1413.2" r="3.1"/>
<circle cx="703.5" cy="1428.0" r="3.1"/>
<circle cx="706.0" cy="1403.5" r="3.1"/>
<circle cx="705.3" cy="1431.9" r="3.1"/>
<circle cx="706.4" cy="1415.9" r="3.1"/>
<circle cx="704.9" cy="1418.8" r="3.1"/>
<circle cx="703.9" cy="1401.8" r="3.1"/>
<circle cx="703.9" cy="1423.5" r="3.1"/>
<circle cx="704.5" cy="1417.7" r="3.1"/>
<circle cx="704.6" cy="1415.7" r="3.1"/>
<circle cx="703.7" cy="1395.5" r="3.1"/>
<circle cx="706.8" cy="1409.6" r="3.1"/>
<circle cx="703.6" cy="1420.6" r="3.1"/>
<circle cx="706.0" cy="1400.3" r="3.1"/>
<circle cx="705.3" cy="1408.3" r="3.1"/>
<circle cx="705.1" cy="1394.5" r="3.1"/>
<circle cx="703.3" cy="1435.9" r="3.1"/>
<circle cx="706.3" cy="1414.4" r="3.1"/>
<circle cx="705.2" cy="1404.8" r="3.1"/>
<circle cx="706.0" cy="1411.8" r="3.1"/>
<circle cx="706.6" cy="1426.4" r="3.1"/>
<circle cx="706.1" cy="1434.7" r="3.1"/>
<circle cx="704.1" cy="1395.2" r="3.1"/>
<circle cx="703.9" cy="1401.3" r="3.1"/>
<circle cx="703.5" cy="1395.8" r="3.1"/>
<circle cx="705.2" cy="1430.8" r="3.1"/>
<circle cx="704.8" cy="1434.0" r="3.1"/>
<circle cx="706.5" cy="1396.3" r="3.1"/>
<circle cx="705.4" cy="1410.6" r="3.1"/>
<circle cx="703.6" cy="1434.6" r="3.1"/>
<circle cx="710.9" cy="1417.7" r="3.1"/>
<circle cx="712.3" cy="1434.4" r="3.1"/>
<circle cx="712.4" cy="1410.4" r="3.1"/>
<circle cx="711.6" cy="1400.4" r="3.1"/>
<circle cx="713.5" cy="1435.9" r="3.1"/>
<circle cx="710.8" cy="1395.2" r="3.1"/>
<circle cx="710.9" cy="1408.6" r="3.1"/>
<circle cx="713.2" cy="1432.2" r="3.1"/>
<circle cx="713.0" cy="1395.6" r="3.1"/>
<circle cx="712.8" cy="1423.9" r="3.1"/>
<circle cx="712.3" cy="1435.7" r="3.1"/>
<circle cx="710.2" cy="1399.8" r="3.1"/>
<circle cx="712.7" cy="1433.7" r="3.1"/>
<circle cx="712.4" cy="1406.4" r="3.1"/>
<circle cx="712.1" cy="1426.0" r="3.1"/>
<circle cx="710.4" cy="1407.4" r="3.1"/>
<circle cx="710.9" cy="1398.9" r="3.1"/>
<circle cx="711.7" cy="1400.8" r="3.1"/>
<circle cx="710.9" cy="1399.7" r="3.1"/>
<circle cx="712.4" cy="1394.1" r="3.1"/>
<circle cx="726.9" cy="1401.9" r="3.1"/>
<circle cx="724.1" cy="1433.2" r="3.1"/>
<circle cx="724.9" cy="1433.5" r="3.1"/>
<circle cx="727.5" cy="1431.5" r="3.1"/>
<circle cx="724.6" cy="1412.7" r="3.1"/>
<circle cx="724.4" cy="1433.3" r="3.1"/>
<circle cx="727.4" cy="1420.4" r="3.1"/>
<circle cx="725.8" cy="1408.1" r="3.1"/>
<circle cx="727.3" cy="1414.0" r="3.1"/>
<circle cx="726.5" cy="1399.7" r="3.1"/>
<circle cx="724.9" cy="1396.0" r="3.1"/>
<circle cx="726.9" cy="1417.2" r="3.1"/>
<circle cx="724.6" cy="1430.8" r="3.1"/>
<circle cx="725.1" cy="1411.2" r="3.1"/>
<circle cx="724.6" cy="1405.2" r="3.1"/>
<circle cx="727.4" cy="1407.9" r="3.1"/>
<circle cx="739.0" cy="1414.6" r="3.1"/>
<circle cx="739.9" cy="1432.2" r="3.1"/>
<circle cx="738.7" cy="1435.4" r="3.1"/>
<circle cx="738.3" cy="1431.8" r="3.1"/>
<circle cx="742.0" cy="1402.6" r="3.1"/>
<circle cx="740.9" cy="1405.8" r="3.1"/>
<circle cx="739.5" cy="1402.2" r="3.1"/>
<circle cx="740.2" cy="1435.9" r="3.1"/>
<circle cx="744.0" cy="1433.1" r="3.1"/>
<circle cx="738.6" cy="1406.0" r="3.1"/>
<circle cx="743.4" cy="1396.1" r="3.1"/>
<circle cx="742.4" cy="1406.1" r="3.1"/>
<circle cx="760.9" cy="1394.3" r="3.1"/>
<circle cx="759.8" cy="1408.2" r="3.1"/>
<circle cx="755.8" cy="1393.7" r="3.1"/>
<circle cx="760.0" cy="1416.1" r="3.1"/>
<circle cx="756.1" cy="1412.2" r="3.1"/>
<circle cx="760.5" cy="1402.9" r="3.1"/>
<circle cx="758.4" cy="1399.5" r="3.1"/>
<circle cx="756.1" cy="1426.5" r="3.1"/>
<circle cx="759.3" cy="1402.0" r="3.1"/>
<circle cx="755.5" cy="1397.3" r="3.1"/>
<circle cx="758.7" cy="1414.8" r="3.1"/>
<circle cx="756.6" cy="1402.4" r="3.1"/>
<circle cx="758.7" cy="1423.8" r="3.1"/>
<circle cx="759.9" cy="1418.5" r="3.1"/>
<circle cx="764.8" cy="1396.4" r="3.1"/>
<circle cx="766.9" cy="1411.0" r="3.1"/>
<circle cx="766.9" cy="1396.0" r="3.1"/>
<circle cx="767.2" cy="1407.9" r="3.1"/>
<circle cx="767.4" cy="1430.5" r="3.1"/>
<circle cx="766.0" cy="1394.3" r="3.1"/>
<circle cx="767.6" cy="1414.0" r="3.1"/>
<circle cx="767.5" cy="1405.0" r="3.1"/>
<circle cx="764.7" cy="1429.1" r="3.1"/>
<circle cx="765.5" cy="1400.6" r="3.1"/>
<circle cx="765.5" cy="1419.0" r="3.1"/>
<circle cx="764.0" cy="1415.8" r="3.1"/>
<circle cx="765.8" cy="1415.6" r="3.1"/>
<circle cx="764.5" cy="1424.1" r="3.1"/>
<circle cx="767.3" cy="1430.6" r="3.1"/>
<circle cx="765.3" cy="1424.0" r="3.1"/>
<circle cx="765.5" cy="1425.7" r="3.1"/>
<circle cx="764.2" cy="1430.9" r="3.1"/>
<circle cx="767.8" cy="1414.7" r="3.1"/>
<circle cx="766.1" cy="1416.3" r="3.1"/>
<circle cx="766.1" cy="1394.5" r="3.1"/>
<circle cx="767.9" cy="1403.2" r="3.1"/>
<circle cx="764.7" cy="1398.0" r="3.1"/>
<circle cx="765.0" cy="1428.5" r="3.1"/>
<circle cx="764.1" cy="1397.7" r="3.1"/>
<circle cx="766.8" cy="1401.9" r="3.1"/>
<circle cx="764.1" cy="1419.2" r="3.1"/>
<circle cx="766.3" cy="1415.9" r="3.1"/>
<circle cx="766.8" cy="1398.0" r="3.1"/>
<circle cx="767.5" cy="1424.2" r="3.1"/>
<circle cx="764.2" cy="1398.9" r="3.1"/>
<circle cx="766.0" cy="1415.0" r="3.1"/>
<circle cx="765.1" cy="1398.8" r="3.1"/>
<circle cx="765.6" cy="1399.4" r="3.1"/>
<circle cx="766.4" cy="1430.4" r="3.1"/>
<circle cx="764.6" cy="1418.1" r="3.1"/>
<circle cx="767.0" cy="1400.6" r="3.1"/>
<circle cx="767.3" cy="1433.6" r="3.1"/>
<circle cx="765.6" cy="1411.6" r="3.1"/>
<circle cx="767.4" cy="1416.0" r="3.1"/>
<circle cx="765.6" cy="1433.8" r="3.1"/>
<circle cx="767.1" cy="1408.1" r="3.1"/>
<circle cx="765.0" cy="1407.9" r="3.1"/>
<circle cx="765.7" cy="1435.5" r="3.1"/>
<circle cx="767.2" cy="1432.6" r="3.1"/>
<circle cx="767.3" cy="1429.8" r="3.1"/>
<circle cx="764.2" cy="1415.7" r="3.1"/>
<circle cx="767.8" cy="1433.5" r="3.1"/>
<circle cx="765.0" cy="1411.6" r="3.1"/>
<circle cx="766.5" cy="1409.2" r="3.1"/>
<circle cx="771.1" cy="1396.6" r="3.1"/>
<circle cx="770.7" cy="1415.2" r="3.1"/>
<circle cx="769.1" cy="1399.6" r="3.1"/>
<circle cx="772.9" cy="1426.8" r="3.1"/>
<circle cx="772.7" cy="1420.6" r="3.1"/>
<circle cx="772.2" cy="1431.4" r="3.1"/>
<circle cx="772.5" cy="1395.1" r="3.1"/>
<circle cx="771.6" cy="1404.9" r="3.1"/>
<circle cx="771.7" cy="1405.3" r="3.1"/>
<circle cx="771.2" cy="1433.1" r="3.1"/>
<circle cx="771.5" cy="1404.3" r="3.1"/>
<circle cx="771.1" cy="1412.1" r="3.1"/>
<circle cx="772.8" cy="1405.9" r="3.1"/>
<circle cx="770.2" cy="1421.2" r="3.1"/>
<circle cx="769.5" cy="1419.0" r="3.1"/>
<circle cx="772.8" cy="1415.5" r="3.1"/>
<circle cx="770.1" cy="1413.5" r="3.1"/>
<circle cx="771.1" cy="1399.9" r="3.1"/>
<circle cx="769.5" cy="1399.2" r="3.1"/>
<circle cx="770.2" cy="1411.0" r="3.1"/>
<circle cx="770.2" cy="1404.0" r="3.1"/>
<circle cx="769.4" cy="1416.9" r="3.1"/>
<circle cx="772.4" cy="1419.6" r="3.1"/>
<circle cx="771.3" cy="1421.4" r="3.1"/>
<circle cx="769.8" cy="1423.9" r="3.1"/>
<circle cx="770.8" cy="1417.0" r="3.1"/>
<circle cx="771.5" cy="1413.6" r="3.1"/>
<circle cx="770.2" cy="1403.9" r="3.1"/>
<circle cx="769.9" cy="1415.5" r="3.1"/>
<circle cx="770.5" cy="1418.6" r="3.1"/>
<circle cx="769.0" cy="1408.7" r="3.1"/>
<circle cx="772.4" cy="1403.8" r="3.1"/>
<circle cx="771.2" cy="1414.6" r="3.1"/>
<circle cx="770.1" cy="1435.8" r="3.1"/>
<circle cx="770.2" cy="1426.6" r="3.1"/>
<circle cx="769.6" cy="1396.5" r="3.1"/>
<circle cx="772.5" cy="1412.4" r="3.1"/>
<circle cx="769.2" cy="1410.2" r="3.1"/>
<circle cx="770.8" cy="1425.0" r="3.1"/>
<circle cx="769.4" cy="1403.2" r="3.1"/>
<circle cx="772.8" cy="1425.1" r="3.1"/>
<circle cx="769.6" cy="1408.0" r="3.1"/>
<circle cx="770.4" cy="1422.4" r="3.1"/>
<circle cx="771.5" cy="1429.9" r="3.1"/>
<circle cx="772.3" cy="1415.7" r="3.1"/>
<circle cx="782.9" cy="1425.3" r="3.1"/>
<circle cx="783.1" cy="1413.9" r="3.1"/>
<circle cx="783.3" cy="1423.9" r="3.1"/>
<circle cx="784.3" cy="1399.0" r="3.1"/>
<circle cx="784.0" cy="1393.8" r="3.1"/>
<circle cx="783.1" cy="1418.6" r="3.1"/>
<circle cx="781.0" cy="1434.7" r="3.1"/>
<circle cx="781.6" cy="1411.4" r="3.1"/>
<circle cx="783.3" cy="1430.9" r="3.1"/>
<circle cx="781.9" cy="1409.8" r="3.1"/>
<circle cx="780.6" cy="1413.2" r="3.1"/>
<circle cx="782.8" cy="1406.1" r="3.1"/>
<circle cx="780.1" cy="1417.3" r="3.1"/>
<circle cx="780.1" cy="1407.3" r="3.1"/>
<circle cx="783.3" cy="1429.9" r="3.1"/>
<circle cx="781.0" cy="1412.6" r="3.1"/>
<circle cx="778.5" cy="1406.6" r="3.1"/>
<circle cx="778.2" cy="1418.2" r="3.1"/>
<circle cx="781.7" cy="1397.4" r="3.1"/>
<circle cx="784.4" cy="1407.4" r="3.1"/>
<circle cx="783.7" cy="1429.4" r="3.1"/>
<circle cx="784.7" cy="1402.3" r="3.1"/>
<circle cx="794.3" cy="1432.5" r="3.1"/>
<circle cx="790.1" cy="1395.6" r="3.1"/>
<circle cx="795.6" cy="1414.8" r="3.1"/>
<circle cx="799.2" cy="1426.6" r="3.1"/>
<circle cx="795.4" cy="1436.2" r="3.1"/>
<circle cx="795.2" cy="1415.7" r="3.1"/>
<circle cx="796.9" cy="1410.2" r="3.1"/>
<circle cx="793.6" cy="1419.0" r="3.1"/>
<circle cx="793.5" cy="1434.1" r="3.1"/>
<circle cx="796.8" cy="1416.0" r="3.1"/>
<circle cx="791.0" cy="1409.6" r="3.1"/>
<circle cx="794.0" cy="1417.6" r="3.1"/>
<circle cx="795.7" cy="1431.2" r="3.1"/>
<circle cx="799.6" cy="1414.4" r="3.1"/>
<circle cx="794.4" cy="1420.3" r="3.1"/>
<circle cx="800.0" cy="1408.3" r="3.1"/>
<circle cx="795.3" cy="1428.4" r="3.1"/>
<circle cx="791.7" cy="1407.2" r="3.1"/>
<circle cx="831.9" cy="1428.9" r="3.1"/>
<circle cx="830.1" cy="1398.3" r="3.1"/>
<circle cx="831.6" cy="1423.1" r="3.1"/>
<circle cx="845.6" cy="1435.9" r="3.1"/>
<circle cx="846.1" cy="1411.6" r="3.1"/>
<circle cx="840.3" cy="1406.0" r="3.1"/>
<circle cx="843.1" cy="1415.2" r="3.1"/>
<circle cx="840.5" cy="1401.4" r="3.1"/>
<circle cx="844.0" cy="1419.4" r="3.1"/>
<circle cx="841.8" cy="1436.0" r="3.1"/>
<circle cx="844.1" cy="1395.4" r="3.1"/>
<circle cx="842.3" cy="1427.2" r="3.1"/>
<circle cx="841.5" cy="1423.1" r="3.1"/>
<circle cx="839.0" cy="1406.6" r="3.1"/>
<circle cx="845.7" cy="1418.6" r="3.1"/>
<circle cx="858.0" cy="1402.0" r="3.1"/>
<circle cx="857.0" cy="1417.2" r="3.1"/>
<circle cx="855.6" cy="1421.2" r="3.1"/>
<circle cx="857.2" cy="1436.2" r="3.1"/>
<circle cx="857.4" cy="1411.2" r="3.1"/>
<circle cx="854.7" cy="1400.3" r="3.1"/>
<circle cx="858.6" cy="1398.2" r="3.1"/>
<circle cx="854.6" cy="1400.9" r="3.1"/>
<circle cx="857.1" cy="1428.7" r="3.1"/>
<circle cx="857.7" cy="1428.0" r="3.1"/>
<circle cx="854.4" cy="1394.1" r="3.1"/>
<circle cx="858.6" cy="1407.4" r="3.1"/>
<circle cx="874.6" cy="1408.7" r="3.1"/>
<circle cx="868.0" cy="1405.0" r="3.1"/>
<circle cx="867.2" cy="1432.2" r="3.1"/>
<circle cx="873.0" cy="1408.5" r="3.1"/>
<circle cx="871.4" cy="1410.1" r="3.1"/>
<circle cx="866.7" cy="1431.6" r="3.1"/>
<circle cx="873.0" cy="1434.6" r="3.1"/>
<circle cx="871.3" cy="1420.1" r="3.1"/>
<circle cx="869.0" cy="1395.5" r="3.1"/>
<circle cx="877.2" cy="1430.1" r="3.1"/>
<circle cx="869.8" cy="1432.0" r="3.1"/>
<circle cx="875.8" cy="1406.6" r="3.1"/>
<circle cx="873.2" cy="1434.6" r="3.1"/>
<circle cx="871.9" cy="1434.2" r="3.1"/>
<circle cx="884.6" cy="1410.2" r="3.1"/>
<circle cx="886.5" cy="1403.1" r="3.1"/>
<circle cx="884.8" cy="1431.0" r="3.1"/>
<circle cx="885.5" cy="1427.5" r="3.1"/>
<circle cx="884.6" cy="1401.0" r="3.1"/>
<circle cx="885.0" cy="1401.6" r="3.1"/>
<circle cx="887.5" cy="1406.0" r="3.1"/>
<circle cx="885.8" cy="1398.5" r="3.1"/>
<circle cx="885.7" cy="1410.1" r="3.1"/>
<circle cx="885.2" cy="1396.4" r="3.1"/>
<circle cx="884.1" cy="1428.9" r="3.1"/>
<circle cx="885.0" cy="1404.1" r="3.1"/>
<circle cx="884.4" cy="1405.7" r="3.1"/>
<circle cx="884.5" cy="1395.1" r="3.1"/>
<circle cx="886.3" cy="1408.2" r="3.1"/>
<circle cx="884.2" cy="1423.7" r="3.1"/>
<circle cx="884.0" cy="1405.1" r="3.1"/>
<circle cx="886.9" cy="1399.1" r="3.1"/>
<circle cx="894.8" cy="1429.3" r="3.1"/>
<circle cx="896.2" cy="1400.4" r="3.1"/>
<circle cx="894.4" cy="1424.4" r="3.1"/>
<circle cx="894.5" cy="1434.5" r="3.1"/>
</g>
<g fill="#e3862b" fill-opacity="0.25" stroke="#e3862b" stroke-opacity="0.45" stroke-width="1.3">
<circle cx="936.7" cy="1409.9" r="3.1"/>
<circle cx="935.9" cy="1406.9" r="3.1"/>
<circle cx="937.7" cy="1401.3" r="3.1"/>
<circle cx="938.3" cy="1417.9" r="3.1"/>
<circle cx="941.3" cy="1404.5" r="3.1"/>
<circle cx="940.5" cy="1422.8" r="3.1"/>
<circle cx="980.6" cy="1393.6" r="3.1"/>
<circle cx="982.0" cy="1426.8" r="3.1"/>
<circle cx="980.4" cy="1395.4" r="3.1"/>
<circle cx="982.1" cy="1419.5" r="3.1"/>
<circle cx="945.3" cy="1404.0" r="3.1"/>
<circle cx="945.5" cy="1427.4" r="3.1"/>
<circle cx="945.8" cy="1432.6" r="3.1"/>
<circle cx="947.4" cy="1397.3" r="3.1"/>
<circle cx="1061.6" cy="1410.4" r="3.1"/>
<circle cx="944.8" cy="1429.0" r="3.1"/>
<circle cx="943.4" cy="1397.4" r="3.1"/>
<circle cx="1010.2" cy="1411.7" r="3.1"/>
<circle cx="1010.2" cy="1423.1" r="3.1"/>
<circle cx="1009.6" cy="1429.0" r="3.1"/>
<circle cx="922.4" cy="1412.9" r="3.1"/>
<circle cx="920.6" cy="1423.4" r="3.1"/>
<circle cx="921.8" cy="1415.5" r="3.1"/>
<circle cx="923.3" cy="1399.1" r="3.1"/>
<circle cx="922.8" cy="1395.5" r="3.1"/>
<circle cx="992.4" cy="1428.0" r="3.1"/>
<circle cx="1037.4" cy="1416.9" r="3.1"/>
<circle cx="1039.6" cy="1420.8" r="3.1"/>
<circle cx="969.0" cy="1404.3" r="3.1"/>
<circle cx="954.3" cy="1408.9" r="3.1"/>
<circle cx="969.5" cy="1402.2" r="3.1"/>
<circle cx="969.2" cy="1399.4" r="3.1"/>
<circle cx="970.4" cy="1422.2" r="3.1"/>
<circle cx="1051.5" cy="1403.9" r="3.1"/>
<circle cx="1052.4" cy="1412.6" r="3.1"/>
<circle cx="1053.6" cy="1408.6" r="3.1"/>
<circle cx="956.9" cy="1431.4" r="3.1"/>
<circle cx="956.4" cy="1417.7" r="3.1"/>
<circle cx="1000.1" cy="1428.4" r="3.1"/>
<circle cx="1000.7" cy="1426.1" r="3.1"/>
<circle cx="963.7" cy="1422.1" r="3.1"/>
<circle cx="912.1" cy="1413.3" r="3.1"/>
<circle cx="912.6" cy="1429.1" r="3.1"/>
<circle cx="954.6" cy="1406.0" r="3.1"/>
<circle cx="955.3" cy="1402.4" r="3.1"/>
<circle cx="954.4" cy="1405.6" r="3.1"/>
<circle cx="1027.4" cy="1423.6" r="3.1"/>
<circle cx="1028.1" cy="1398.4" r="3.1"/>
<circle cx="1027.8" cy="1413.6" r="3.1"/>
<circle cx="950.1" cy="1400.8" r="3.1"/>
<circle cx="1037.4" cy="1394.1" r="3.1"/>
<circle cx="1040.2" cy="1425.6" r="3.1"/>
<circle cx="1037.5" cy="1424.2" r="3.1"/>
<circle cx="1040.2" cy="1417.7" r="3.1"/>
<circle cx="1056.8" cy="1414.5" r="3.1"/>
<circle cx="1057.8" cy="1401.7" r="3.1"/>
<circle cx="1058.1" cy="1394.0" r="3.1"/>
<circle cx="950.8" cy="1421.1" r="3.1"/>
<circle cx="949.9" cy="1433.5" r="3.1"/>
<circle cx="905.8" cy="1404.3" r="3.1"/>
<circle cx="904.5" cy="1399.5" r="3.1"/>
<circle cx="961.5" cy="1426.7" r="3.1"/>
<circle cx="974.9" cy="1406.3" r="3.1"/>
<circle cx="943.5" cy="1420.8" r="3.1"/>
<circle cx="1052.6" cy="1433.2" r="3.1"/>
<circle cx="931.5" cy="1427.1" r="3.1"/>
<circle cx="933.5" cy="1425.3" r="3.1"/>
<circle cx="932.0" cy="1401.5" r="3.1"/>
<circle cx="933.5" cy="1407.3" r="3.1"/>
<circle cx="920.2" cy="1417.1" r="3.1"/>
<circle cx="920.2" cy="1429.1" r="3.1"/>
<circle cx="919.8" cy="1395.4" r="3.1"/>
<circle cx="920.8" cy="1420.4" r="3.1"/>
<circle cx="921.6" cy="1423.7" r="3.1"/>
<circle cx="1028.8" cy="1433.9" r="3.1"/>
<circle cx="907.2" cy="1414.9" r="3.1"/>
<circle cx="906.2" cy="1406.4" r="3.1"/>
<circle cx="907.5" cy="1397.0" r="3.1"/>
<circle cx="936.0" cy="1400.6" r="3.1"/>
<circle cx="935.3" cy="1435.0" r="3.1"/>
<circle cx="934.2" cy="1395.3" r="3.1"/>
</g>
<g fill="#7a3be6" fill-opacity="0.35" stroke="#7a3be6" stroke-opacity="0.65" stroke-width="1.3">
<circle cx="733.5" cy="1348.6" r="3.1"/>
<circle cx="734.0" cy="1340.1" r="3.1"/>
<circle cx="734.3" cy="1378.5" r="3.1"/>
<circle cx="798.1" cy="1359.1" r="3.1"/>
<circle cx="796.1" cy="1369.8" r="3.1"/>
<circle cx="797.1" cy="1359.0" r="3.1"/>
<circle cx="796.4" cy="1359.7" r="3.1"/>
<circle cx="797.7" cy="1377.2" r="3.1"/>
<circle cx="798.6" cy="1347.4" r="3.1"/>
<circle cx="801.3" cy="1359.9" r="3.1"/>
<circle cx="802.2" cy="1355.7" r="3.1"/>
<circle cx="801.0" cy="1343.8" r="3.1"/>
<circle cx="801.4" cy="1360.7" r="3.1"/>
<circle cx="803.5" cy="1380.9" r="3.1"/>
<circle cx="803.2" cy="1383.8" r="3.1"/>
<circle cx="803.5" cy="1367.9" r="3.1"/>
<circle cx="803.0" cy="1342.7" r="3.1"/>
<circle cx="802.6" cy="1367.4" r="3.1"/>
<circle cx="801.4" cy="1365.7" r="3.1"/>
<circle cx="803.4" cy="1361.6" r="3.1"/>
<circle cx="802.5" cy="1353.5" r="3.1"/>
<circle cx="801.5" cy="1379.8" r="3.1"/>
<circle cx="800.5" cy="1348.5" r="3.1"/>
<circle cx="802.6" cy="1360.1" r="3.1"/>
<circle cx="800.7" cy="1369.7" r="3.1"/>
<circle cx="801.6" cy="1366.1" r="3.1"/>
<circle cx="801.7" cy="1363.8" r="3.1"/>
<circle cx="802.2" cy="1357.8" r="3.1"/>
<circle cx="800.8" cy="1348.1" r="3.1"/>
<circle cx="803.2" cy="1364.7" r="3.1"/>
<circle cx="800.8" cy="1378.8" r="3.1"/>
<circle cx="801.2" cy="1344.3" r="3.1"/>
<circle cx="802.1" cy="1351.3" r="3.1"/>
<circle cx="802.0" cy="1364.9" r="3.1"/>
<circle cx="801.1" cy="1365.8" r="3.1"/>
<circle cx="800.8" cy="1363.1" r="3.1"/>
<circle cx="802.3" cy="1343.6" r="3.1"/>
<circle cx="801.7" cy="1343.3" r="3.1"/>
<circle cx="801.8" cy="1378.9" r="3.1"/>
<circle cx="802.2" cy="1372.2" r="3.1"/>
<circle cx="802.8" cy="1345.2" r="3.1"/>
<circle cx="803.6" cy="1372.5" r="3.1"/>
<circle cx="800.7" cy="1377.4" r="3.1"/>
<circle cx="801.7" cy="1347.7" r="3.1"/>
<circle cx="803.5" cy="1365.3" r="3.1"/>
<circle cx="802.9" cy="1346.2" r="3.1"/>
<circle cx="802.9" cy="1342.6" r="3.1"/>
<circle cx="801.2" cy="1356.8" r="3.1"/>
<circle cx="800.4" cy="1366.7" r="3.1"/>
<circle cx="810.6" cy="1353.5" r="3.1"/>
<circle cx="812.2" cy="1359.2" r="3.1"/>
<circle cx="812.7" cy="1368.0" r="3.1"/>
<circle cx="812.7" cy="1365.3" r="3.1"/>
<circle cx="812.8" cy="1379.2" r="3.1"/>
<circle cx="810.4" cy="1373.5" r="3.1"/>
<circle cx="811.0" cy="1374.4" r="3.1"/>
<circle cx="812.1" cy="1377.2" r="3.1"/>
<circle cx="810.3" cy="1356.8" r="3.1"/>
<circle cx="812.3" cy="1382.7" r="3.1"/>
<circle cx="812.2" cy="1342.0" r="3.1"/>
<circle cx="811.8" cy="1344.5" r="3.1"/>
<circle cx="811.7" cy="1376.1" r="3.1"/>
<circle cx="810.3" cy="1381.6" r="3.1"/>
<circle cx="812.1" cy="1351.5" r="3.1"/>
<circle cx="810.5" cy="1360.1" r="3.1"/>
<circle cx="812.6" cy="1366.2" r="3.1"/>
<circle cx="810.3" cy="1340.9" r="3.1"/>
<circle cx="810.3" cy="1376.0" r="3.1"/>
<circle cx="810.5" cy="1364.9" r="3.1"/>
<circle cx="810.8" cy="1370.9" r="3.1"/>
<circle cx="811.1" cy="1346.5" r="3.1"/>
<circle cx="812.7" cy="1364.2" r="3.1"/>
<circle cx="812.1" cy="1376.4" r="3.1"/>
<circle cx="812.9" cy="1340.6" r="3.1"/>
<circle cx="811.0" cy="1346.8" r="3.1"/>
<circle cx="819.0" cy="1379.3" r="3.1"/>
<circle cx="832.5" cy="1341.6" r="3.1"/>
<circle cx="830.5" cy="1376.8" r="3.1"/>
<circle cx="832.1" cy="1357.7" r="3.1"/>
<circle cx="831.4" cy="1347.1" r="3.1"/>
<circle cx="832.6" cy="1357.7" r="3.1"/>
<circle cx="832.7" cy="1367.5" r="3.1"/>
<circle cx="830.1" cy="1354.8" r="3.1"/>
<circle cx="830.6" cy="1380.2" r="3.1"/>
<circle cx="831.8" cy="1342.0" r="3.1"/>
<circle cx="830.4" cy="1356.2" r="3.1"/>
<circle cx="831.4" cy="1366.0" r="3.1"/>
<circle cx="831.1" cy="1355.9" r="3.1"/>
<circle cx="829.9" cy="1366.1" r="3.1"/>
<circle cx="831.0" cy="1340.9" r="3.1"/>
<circle cx="831.4" cy="1384.4" r="3.1"/>
<circle cx="830.0" cy="1346.6" r="3.1"/>
<circle cx="832.0" cy="1352.3" r="3.1"/>
<circle cx="830.8" cy="1362.5" r="3.1"/>
<circle cx="830.7" cy="1365.6" r="3.1"/>
<circle cx="831.6" cy="1383.1" r="3.1"/>
<circle cx="833.1" cy="1341.5" r="3.1"/>
<circle cx="831.7" cy="1374.7" r="3.1"/>
<circle cx="832.7" cy="1374.8" r="3.1"/>
<circle cx="831.9" cy="1368.6" r="3.1"/>
<circle cx="831.1" cy="1352.7" r="3.1"/>
<circle cx="832.4" cy="1379.3" r="3.1"/>
<circle cx="832.9" cy="1370.7" r="3.1"/>
<circle cx="830.9" cy="1374.3" r="3.1"/>
<circle cx="832.3" cy="1362.9" r="3.1"/>
<circle cx="831.9" cy="1355.8" r="3.1"/>
<circle cx="831.7" cy="1358.3" r="3.1"/>
<circle cx="830.1" cy="1355.2" r="3.1"/>
<circle cx="830.9" cy="1384.5" r="3.1"/>
<circle cx="831.4" cy="1356.5" r="3.1"/>
<circle cx="830.7" cy="1350.6" r="3.1"/>
<circle cx="831.0" cy="1346.1" r="3.1"/>
<circle cx="829.9" cy="1379.2" r="3.1"/>
<circle cx="831.4" cy="1360.0" r="3.1"/>
<circle cx="831.7" cy="1353.6" r="3.1"/>
<circle cx="830.4" cy="1343.0" r="3.1"/>
<circle cx="830.9" cy="1353.9" r="3.1"/>
<circle cx="832.2" cy="1364.8" r="3.1"/>
<circle cx="832.9" cy="1355.3" r="3.1"/>
<circle cx="832.8" cy="1366.3" r="3.1"/>
<circle cx="830.2" cy="1348.0" r="3.1"/>
<circle cx="837.3" cy="1384.4" r="3.1"/>
<circle cx="836.4" cy="1374.8" r="3.1"/>
<circle cx="836.7" cy="1379.1" r="3.1"/>
<circle cx="835.3" cy="1361.8" r="3.1"/>
<circle cx="838.6" cy="1352.4" r="3.1"/>
<circle cx="846.1" cy="1341.0" r="3.1"/>
<circle cx="845.3" cy="1352.1" r="3.1"/>
<circle cx="849.6" cy="1349.8" r="3.1"/>
<circle cx="847.2" cy="1349.0" r="3.1"/>
<circle cx="848.8" cy="1378.9" r="3.1"/>
<circle cx="849.2" cy="1348.9" r="3.1"/>
<circle cx="849.9" cy="1383.3" r="3.1"/>
<circle cx="848.8" cy="1343.6" r="3.1"/>
<circle cx="850.5" cy="1379.4" r="3.1"/>
<circle cx="846.7" cy="1346.1" r="3.1"/>
<circle cx="845.5" cy="1364.2" r="3.1"/>
<circle cx="851.0" cy="1368.8" r="3.1"/>
<circle cx="851.4" cy="1349.6" r="3.1"/>
<circle cx="846.6" cy="1373.7" r="3.1"/>
<circle cx="849.2" cy="1358.2" r="3.1"/>
<circle cx="849.4" cy="1355.2" r="3.1"/>
<circle cx="854.3" cy="1358.6" r="3.1"/>
<circle cx="854.3" cy="1368.2" r="3.1"/>
<circle cx="856.0" cy="1362.2" r="3.1"/>
<circle cx="857.6" cy="1351.6" r="3.1"/>
<circle cx="856.8" cy="1340.6" r="3.1"/>
<circle cx="859.6" cy="1365.4" r="3.1"/>
<circle cx="859.9" cy="1342.5" r="3.1"/>
<circle cx="857.7" cy="1372.6" r="3.1"/>
<circle cx="856.0" cy="1344.2" r="3.1"/>
<circle cx="854.9" cy="1346.4" r="3.1"/>
<circle cx="858.6" cy="1344.0" r="3.1"/>
<circle cx="858.9" cy="1359.0" r="3.1"/>
<circle cx="857.2" cy="1366.5" r="3.1"/>
<circle cx="857.3" cy="1369.6" r="3.1"/>
<circle cx="871.0" cy="1354.9" r="3.1"/>
<circle cx="872.4" cy="1351.6" r="3.1"/>
<circle cx="872.1" cy="1374.3" r="3.1"/>
<circle cx="872.8" cy="1353.9" r="3.1"/>
<circle cx="872.7" cy="1384.0" r="3.1"/>
<circle cx="869.5" cy="1352.5" r="3.1"/>
<circle cx="870.2" cy="1382.3" r="3.1"/>
<circle cx="866.3" cy="1340.4" r="3.1"/>
<circle cx="869.8" cy="1369.5" r="3.1"/>
<circle cx="872.7" cy="1356.3" r="3.1"/>
<circle cx="874.9" cy="1350.3" r="3.1"/>
<circle cx="872.6" cy="1344.0" r="3.1"/>
<circle cx="865.3" cy="1346.0" r="3.1"/>
<circle cx="865.6" cy="1362.6" r="3.1"/>
<circle cx="870.6" cy="1348.2" r="3.1"/>
<circle cx="874.4" cy="1356.5" r="3.1"/>
<circle cx="885.5" cy="1348.0" r="3.1"/>
<circle cx="891.4" cy="1381.5" r="3.1"/>
<circle cx="885.6" cy="1341.3" r="3.1"/>
<circle cx="891.8" cy="1350.9" r="3.1"/>
<circle cx="893.8" cy="1362.5" r="3.1"/>
<circle cx="890.4" cy="1355.5" r="3.1"/>
<circle cx="892.0" cy="1360.7" r="3.1"/>
<circle cx="887.2" cy="1380.7" r="3.1"/>
<circle cx="885.1" cy="1373.0" r="3.1"/>
<circle cx="884.7" cy="1369.0" r="3.1"/>
<circle cx="888.0" cy="1378.9" r="3.1"/>
<circle cx="884.6" cy="1365.4" r="3.1"/>
<circle cx="888.1" cy="1381.4" r="3.1"/>
<circle cx="893.4" cy="1368.2" r="3.1"/>
<circle cx="886.2" cy="1351.3" r="3.1"/>
<circle cx="886.6" cy="1359.5" r="3.1"/>
<circle cx="886.3" cy="1349.1" r="3.1"/>
<circle cx="891.6" cy="1368.9" r="3.1"/>
<circle cx="887.0" cy="1384.7" r="3.1"/>
<circle cx="886.2" cy="1365.6" r="3.1"/>
<circle cx="885.6" cy="1378.8" r="3.1"/>
<circle cx="892.7" cy="1352.0" r="3.1"/>
<circle cx="902.0" cy="1377.0" r="3.1"/>
<circle cx="898.3" cy="1354.9" r="3.1"/>
<circle cx="899.9" cy="1380.1" r="3.1"/>
<circle cx="897.3" cy="1370.7" r="3.1"/>
<circle cx="900.8" cy="1360.4" r="3.1"/>
<circle cx="900.6" cy="1379.7" r="3.1"/>
<circle cx="897.7" cy="1379.8" r="3.1"/>
<circle cx="898.9" cy="1375.1" r="3.1"/>
<circle cx="902.9" cy="1348.2" r="3.1"/>
<circle cx="902.9" cy="1384.8" r="3.1"/>
<circle cx="898.4" cy="1341.1" r="3.1"/>
<circle cx="896.9" cy="1383.8" r="3.1"/>
<circle cx="896.1" cy="1381.0" r="3.1"/>
<circle cx="897.2" cy="1373.1" r="3.1"/>
<circle cx="896.8" cy="1347.6" r="3.1"/>
<circle cx="901.5" cy="1344.1" r="3.1"/>
<circle cx="898.7" cy="1381.3" r="3.1"/>
<circle cx="901.7" cy="1379.7" r="3.1"/>
<circle cx="903.8" cy="1341.5" r="3.1"/>
<circle cx="897.9" cy="1375.6" r="3.1"/>
<circle cx="901.5" cy="1341.7" r="3.1"/>
<circle cx="900.0" cy="1350.4" r="3.1"/>
<circle cx="899.4" cy="1344.7" r="3.1"/>
<circle cx="896.2" cy="1384.6" r="3.1"/>
<circle cx="898.5" cy="1379.5" r="3.1"/>
<circle cx="897.0" cy="1361.9" r="3.1"/>
<circle cx="897.1" cy="1359.3" r="3.1"/>
<circle cx="897.4" cy="1370.8" r="3.1"/>
<circle cx="897.2" cy="1373.2" r="3.1"/>
<circle cx="900.0" cy="1345.1" r="3.1"/>
<circle cx="898.8" cy="1362.3" r="3.1"/>
<circle cx="903.3" cy="1355.7" r="3.1"/>
<circle cx="897.7" cy="1383.5" r="3.1"/>
<circle cx="903.1" cy="1372.9" r="3.1"/>
<circle cx="898.2" cy="1348.0" r="3.1"/>
<circle cx="898.1" cy="1343.1" r="3.1"/>
<circle cx="906.3" cy="1362.9" r="3.1"/>
<circle cx="909.3" cy="1365.0" r="3.1"/>
<circle cx="908.9" cy="1340.5" r="3.1"/>
<circle cx="911.5" cy="1369.4" r="3.1"/>
<circle cx="910.4" cy="1364.7" r="3.1"/>
<circle cx="911.5" cy="1384.2" r="3.1"/>
<circle cx="913.0" cy="1372.3" r="3.1"/>
<circle cx="909.2" cy="1354.3" r="3.1"/>
<circle cx="909.4" cy="1383.8" r="3.1"/>
<circle cx="909.1" cy="1357.3" r="3.1"/>
<circle cx="909.3" cy="1346.4" r="3.1"/>
<circle cx="914.0" cy="1340.2" r="3.1"/>
<circle cx="910.9" cy="1381.7" r="3.1"/>
<circle cx="908.0" cy="1367.5" r="3.1"/>
<circle cx="909.0" cy="1350.8" r="3.1"/>
<circle cx="907.6" cy="1345.2" r="3.1"/>
<circle cx="912.7" cy="1375.3" r="3.1"/>
<circle cx="913.3" cy="1342.2" r="3.1"/>
<circle cx="911.6" cy="1354.6" r="3.1"/>
<circle cx="911.2" cy="1364.7" r="3.1"/>
<circle cx="908.5" cy="1383.7" r="3.1"/>
<circle cx="906.0" cy="1373.6" r="3.1"/>
<circle cx="912.8" cy="1363.0" r="3.1"/>
<circle cx="910.7" cy="1384.8" r="3.1"/>
<circle cx="907.9" cy="1368.3" r="3.1"/>
<circle cx="911.9" cy="1357.0" r="3.1"/>
<circle cx="911.7" cy="1357.7" r="3.1"/>
<circle cx="910.2" cy="1367.6" r="3.1"/>
<circle cx="911.4" cy="1354.5" r="3.1"/>
<circle cx="911.0" cy="1364.4" r="3.1"/>
<circle cx="907.8" cy="1367.6" r="3.1"/>
<circle cx="908.1" cy="1380.9" r="3.1"/>
<circle cx="909.8" cy="1372.5" r="3.1"/>
<circle cx="910.2" cy="1361.4" r="3.1"/>
<circle cx="907.8" cy="1346.4" r="3.1"/>
<circle cx="913.4" cy="1363.8" r="3.1"/>
<circle cx="920.2" cy="1363.7" r="3.1"/>
<circle cx="922.5" cy="1350.7" r="3.1"/>
<circle cx="917.4" cy="1377.0" r="3.1"/>
<circle cx="919.7" cy="1368.8" r="3.1"/>
<circle cx="922.6" cy="1380.2" r="3.1"/>
<circle cx="922.9" cy="1341.9" r="3.1"/>
<circle cx="919.1" cy="1377.4" r="3.1"/>
<circle cx="922.5" cy="1345.5" r="3.1"/>
<circle cx="917.2" cy="1351.3" r="3.1"/>
<circle cx="916.8" cy="1356.0" r="3.1"/>
<circle cx="922.4" cy="1363.5" r="3.1"/>
<circle cx="919.6" cy="1344.0" r="3.1"/>
<circle cx="919.2" cy="1384.9" r="3.1"/>
<circle cx="921.6" cy="1360.2" r="3.1"/>
<circle cx="919.8" cy="1375.9" r="3.1"/>
<circle cx="922.1" cy="1346.7" r="3.1"/>
<circle cx="921.4" cy="1356.5" r="3.1"/>
<circle cx="920.2" cy="1350.7" r="3.1"/>
<circle cx="919.0" cy="1355.3" r="3.1"/>
<circle cx="919.0" cy="1340.8" r="3.1"/>
<circle cx="917.6" cy="1365.7" r="3.1"/>
<circle cx="916.5" cy="1348.0" r="3.1"/>
<circle cx="921.7" cy="1352.4" r="3.1"/>
<circle cx="918.6" cy="1350.9" r="3.1"/>
<circle cx="922.7" cy="1344.1" r="3.1"/>
<circle cx="921.1" cy="1378.7" r="3.1"/>
<circle cx="917.6" cy="1359.0" r="3.1"/>
<circle cx="922.3" cy="1367.8" r="3.1"/>
<circle cx="919.0" cy="1342.0" r="3.1"/>
<circle cx="919.5" cy="1356.5" r="3.1"/>
<circle cx="921.7" cy="1353.3" r="3.1"/>
<circle cx="919.3" cy="1369.2" r="3.1"/>
<circle cx="922.5" cy="1355.9" r="3.1"/>
<circle cx="919.1" cy="1366.0" r="3.1"/>
<circle cx="923.4" cy="1348.6" r="3.1"/>
<circle cx="923.8" cy="1372.0" r="3.1"/>
<circle cx="927.2" cy="1370.0" r="3.1"/>
<circle cx="927.0" cy="1343.2" r="3.1"/>
<circle cx="929.5" cy="1357.1" r="3.1"/>
<circle cx="928.2" cy="1362.3" r="3.1"/>
<circle cx="930.4" cy="1374.1" r="3.1"/>
<circle cx="925.2" cy="1366.7" r="3.1"/>
<circle cx="927.8" cy="1360.8" r="3.1"/>
<circle cx="930.0" cy="1358.7" r="3.1"/>
<circle cx="927.8" cy="1380.1" r="3.1"/>
<circle cx="927.6" cy="1362.1" r="3.1"/>
<circle cx="928.1" cy="1377.1" r="3.1"/>
<circle cx="929.0" cy="1373.3" r="3.1"/>
<circle cx="927.4" cy="1341.8" r="3.1"/>
<circle cx="929.1" cy="1364.9" r="3.1"/>
<circle cx="929.6" cy="1374.6" r="3.1"/>
<circle cx="925.7" cy="1349.9" r="3.1"/>
<circle cx="925.5" cy="1376.8" r="3.1"/>
<circle cx="925.6" cy="1344.0" r="3.1"/>
<circle cx="929.5" cy="1365.4" r="3.1"/>
<circle cx="925.3" cy="1370.6" r="3.1"/>
<circle cx="937.3" cy="1361.7" r="3.1"/>
<circle cx="933.3" cy="1371.1" r="3.1"/>
<circle cx="935.5" cy="1366.3" r="3.1"/>
<circle cx="939.0" cy="1376.8" r="3.1"/>
<circle cx="938.2" cy="1346.5" r="3.1"/>
</g>
<g fill="#7a3be6" fill-opacity="0.25" stroke="#7a3be6" stroke-opacity="0.45" stroke-width="1.3">
<circle cx="1003.7" cy="1382.8" r="3.1"/>
<circle cx="1002.6" cy="1369.6" r="3.1"/>
<circle cx="1115.3" cy="1380.8" r="3.1"/>
<circle cx="1116.6" cy="1347.0" r="3.1"/>
<circle cx="991.2" cy="1371.3" r="3.1"/>
<circle cx="991.1" cy="1377.6" r="3.1"/>
<circle cx="988.5" cy="1350.5" r="3.1"/>
<circle cx="989.4" cy="1354.3" r="3.1"/>
<circle cx="989.3" cy="1346.9" r="3.1"/>
<circle cx="990.4" cy="1354.6" r="3.1"/>
<circle cx="1094.6" cy="1346.8" r="3.1"/>
<circle cx="1018.6" cy="1384.1" r="3.1"/>
<circle cx="1017.4" cy="1341.5" r="3.1"/>
<circle cx="953.5" cy="1368.8" r="3.1"/>
<circle cx="1082.9" cy="1364.6" r="3.1"/>
<circle cx="1082.5" cy="1360.9" r="3.1"/>
<circle cx="1084.4" cy="1359.3" r="3.1"/>
<circle cx="1084.3" cy="1345.1" r="3.1"/>
<circle cx="1084.7" cy="1345.5" r="3.1"/>
<circle cx="1094.5" cy="1384.8" r="3.1"/>
<circle cx="1094.5" cy="1363.7" r="3.1"/>
<circle cx="953.4" cy="1355.7" r="3.1"/>
<circle cx="954.8" cy="1362.3" r="3.1"/>
<circle cx="955.3" cy="1344.2" r="3.1"/>
<circle cx="954.0" cy="1378.9" r="3.1"/>
<circle cx="1038.2" cy="1364.3" r="3.1"/>
<circle cx="1028.4" cy="1346.3" r="3.1"/>
<circle cx="1028.9" cy="1380.2" r="3.1"/>
<circle cx="1030.6" cy="1350.2" r="3.1"/>
<circle cx="1030.9" cy="1341.5" r="3.1"/>
<circle cx="1046.3" cy="1383.5" r="3.1"/>
<circle cx="979.2" cy="1382.5" r="3.1"/>
<circle cx="980.1" cy="1342.3" r="3.1"/>
<circle cx="979.1" cy="1360.2" r="3.1"/>
<circle cx="978.9" cy="1373.4" r="3.1"/>
<circle cx="978.7" cy="1375.4" r="3.1"/>
<circle cx="1103.4" cy="1343.1" r="3.1"/>
<circle cx="1104.2" cy="1344.3" r="3.1"/>
<circle cx="999.5" cy="1375.5" r="3.1"/>
<circle cx="999.7" cy="1360.8" r="3.1"/>
<circle cx="1035.8" cy="1363.1" r="3.1"/>
<circle cx="999.8" cy="1369.1" r="3.1"/>
<circle cx="999.9" cy="1366.0" r="3.1"/>
<circle cx="1000.5" cy="1356.9" r="3.1"/>
<circle cx="1001.5" cy="1347.4" r="3.1"/>
<circle cx="991.3" cy="1382.4" r="3.1"/>
<circle cx="991.8" cy="1377.9" r="3.1"/>
<circle cx="993.4" cy="1361.6" r="3.1"/>
<circle cx="1066.9" cy="1344.2" r="3.1"/>
<circle cx="1085.0" cy="1345.3" r="3.1"/>
<circle cx="1106.7" cy="1364.1" r="3.1"/>
<circle cx="1105.6" cy="1361.1" r="3.1"/>
<circle cx="1021.0" cy="1364.1" r="3.1"/>
<circle cx="1022.0" cy="1356.5" r="3.1"/>
<circle cx="1021.1" cy="1358.2" r="3.1"/>
<circle cx="1019.1" cy="1345.7" r="3.1"/>
<circle cx="1019.3" cy="1379.2" r="3.1"/>
<circle cx="1055.6" cy="1380.1" r="3.1"/>
<circle cx="1054.1" cy="1382.4" r="3.1"/>
<circle cx="1055.6" cy="1375.6" r="3.1"/>
<circle cx="1055.8" cy="1371.0" r="3.1"/>
<circle cx="1054.8" cy="1373.8" r="3.1"/>
<circle cx="956.4" cy="1351.9" r="3.1"/>
<circle cx="956.0" cy="1357.7" r="3.1"/>
<circle cx="957.5" cy="1353.1" r="3.1"/>
<circle cx="1049.3" cy="1343.8" r="3.1"/>
<circle cx="1048.4" cy="1350.5" r="3.1"/>
<circle cx="1048.4" cy="1375.3" r="3.1"/>
<circle cx="1048.8" cy="1342.8" r="3.1"/>
<circle cx="1041.3" cy="1367.0" r="3.1"/>
<circle cx="1043.5" cy="1341.9" r="3.1"/>
<circle cx="1042.4" cy="1371.1" r="3.1"/>
<circle cx="1043.0" cy="1355.4" r="3.1"/>
<circle cx="1043.0" cy="1360.8" r="3.1"/>
<circle cx="1043.3" cy="1340.5" r="3.1"/>
<circle cx="1084.8" cy="1358.5" r="3.1"/>
<circle cx="1061.5" cy="1344.0" r="3.1"/>
<circle cx="1061.0" cy="1373.0" r="3.1"/>
<circle cx="1062.3" cy="1346.8" r="3.1"/>
<circle cx="995.5" cy="1346.3" r="3.1"/>
<circle cx="995.1" cy="1349.9" r="3.1"/>
<circle cx="995.5" cy="1383.9" r="3.1"/>
<circle cx="971.7" cy="1375.6" r="3.1"/>
<circle cx="970.2" cy="1362.4" r="3.1"/>
<circle cx="971.1" cy="1380.9" r="3.1"/>
<circle cx="971.0" cy="1368.6" r="3.1"/>
<circle cx="969.3" cy="1368.1" r="3.1"/>
<circle cx="1104.8" cy="1375.4" r="3.1"/>
<circle cx="1102.6" cy="1372.3" r="3.1"/>
<circle cx="1103.3" cy="1347.3" r="3.1"/>
<circle cx="962.9" cy="1370.3" r="3.1"/>
<circle cx="962.2" cy="1346.1" r="3.1"/>
<circle cx="962.5" cy="1382.2" r="3.1"/>
</g>
<g fill="#44694a" fill-opacity="0.25" stroke="#44694a" stroke-opacity="0.5" stroke-width="1.3">
<circle cx="1141.2" cy="1320.3" r="3.1"/>
<circle cx="1141.0" cy="1322.7" r="3.1"/>
<circle cx="1140.3" cy="1307.3" r="3.1"/>
<circle cx="1141.0" cy="1321.9" r="3.1"/>
<circle cx="1141.1" cy="1301.6" r="3.1"/>
<circle cx="1141.4" cy="1311.3" r="3.1"/>
<circle cx="1141.3" cy="1293.9" r="3.1"/>
<circle cx="1141.4" cy="1322.1" r="3.1"/>
<circle cx="1160.8" cy="1324.2" r="3.1"/>
<circle cx="1160.7" cy="1297.3" r="3.1"/>
<circle cx="1161.6" cy="1298.9" r="3.1"/>
<circle cx="1161.8" cy="1327.1" r="3.1"/>
<circle cx="1162.5" cy="1318.8" r="3.1"/>
<circle cx="1161.4" cy="1321.9" r="3.1"/>
<circle cx="1187.3" cy="1317.7" r="3.1"/>
<circle cx="1188.5" cy="1323.7" r="3.1"/>
<circle cx="1184.2" cy="1292.7" r="3.1"/>
<circle cx="1186.2" cy="1324.1" r="3.1"/>
<circle cx="1196.7" cy="1314.0" r="3.1"/>
<circle cx="1200.7" cy="1322.3" r="3.1"/>
<circle cx="1194.0" cy="1309.5" r="3.1"/>
<circle cx="1194.1" cy="1293.6" r="3.1"/>
<circle cx="1200.5" cy="1306.6" r="3.1"/>
<circle cx="1198.8" cy="1308.2" r="3.1"/>
<circle cx="1196.7" cy="1298.0" r="3.1"/>
<circle cx="1196.8" cy="1324.5" r="3.1"/>
<circle cx="1199.0" cy="1301.3" r="3.1"/>
<circle cx="1194.7" cy="1300.4" r="3.1"/>
<circle cx="1212.0" cy="1307.6" r="3.1"/>
<circle cx="1211.6" cy="1322.9" r="3.1"/>
<circle cx="1206.2" cy="1317.7" r="3.1"/>
<circle cx="1205.4" cy="1323.6" r="3.1"/>
<circle cx="1206.8" cy="1300.4" r="3.1"/>
<circle cx="1214.6" cy="1304.2" r="3.1"/>
<circle cx="1207.2" cy="1326.4" r="3.1"/>
<circle cx="1211.1" cy="1326.5" r="3.1"/>
<circle cx="1208.9" cy="1310.0" r="3.1"/>
<circle cx="1214.6" cy="1310.3" r="3.1"/>
<circle cx="1214.9" cy="1297.0" r="3.1"/>
<circle cx="1213.3" cy="1295.8" r="3.1"/>
<circle cx="1210.3" cy="1289.0" r="3.1"/>
<circle cx="1206.8" cy="1328.7" r="3.1"/>
<circle cx="1221.6" cy="1323.0" r="3.1"/>
<circle cx="1220.0" cy="1303.8" r="3.1"/>
<circle cx="1218.8" cy="1312.2" r="3.1"/>
<circle cx="1224.9" cy="1310.6" r="3.1"/>
<circle cx="1221.0" cy="1328.0" r="3.1"/>
<circle cx="1225.2" cy="1317.0" r="3.1"/>
<circle cx="1218.6" cy="1315.2" r="3.1"/>
<circle cx="1221.6" cy="1329.2" r="3.1"/>
<circle cx="1220.9" cy="1316.8" r="3.1"/>
<circle cx="1223.1" cy="1304.8" r="3.1"/>
<circle cx="1237.0" cy="1317.4" r="3.1"/>
<circle cx="1238.9" cy="1309.9" r="3.1"/>
<circle cx="1236.2" cy="1330.0" r="3.1"/>
<circle cx="1234.7" cy="1324.1" r="3.1"/>
<circle cx="1237.8" cy="1312.4" r="3.1"/>
<circle cx="1236.6" cy="1320.5" r="3.1"/>
<circle cx="1238.9" cy="1319.6" r="3.1"/>
<circle cx="1238.1" cy="1290.5" r="3.1"/>
<circle cx="1236.0" cy="1294.8" r="3.1"/>
<circle cx="1239.2" cy="1326.4" r="3.1"/>
<circle cx="1235.1" cy="1313.7" r="3.1"/>
<circle cx="1237.3" cy="1291.0" r="3.1"/>
<circle cx="1236.4" cy="1320.4" r="3.1"/>
<circle cx="1237.6" cy="1300.8" r="3.1"/>
<circle cx="1238.2" cy="1301.2" r="3.1"/>
<circle cx="1237.1" cy="1306.7" r="3.1"/>
<circle cx="1239.3" cy="1316.2" r="3.1"/>
<circle cx="1238.4" cy="1317.4" r="3.1"/>
<circle cx="1236.3" cy="1329.4" r="3.1"/>
<circle cx="1237.9" cy="1318.0" r="3.1"/>
<circle cx="1235.8" cy="1295.8" r="3.1"/>
<circle cx="1237.3" cy="1323.7" r="3.1"/>
<circle cx="1238.4" cy="1303.6" r="3.1"/>
<circle cx="1235.1" cy="1310.7" r="3.1"/>
<circle cx="1238.8" cy="1295.8" r="3.1"/>
<circle cx="1238.1" cy="1296.2" r="3.1"/>
<circle cx="1236.0" cy="1291.2" r="3.1"/>
<circle cx="1235.9" cy="1305.1" r="3.1"/>
<circle cx="1239.2" cy="1329.4" r="3.1"/>
<circle cx="1235.3" cy="1302.0" r="3.1"/>
<circle cx="1239.1" cy="1297.3" r="3.1"/>
<circle cx="1236.0" cy="1307.4" r="3.1"/>
<circle cx="1234.9" cy="1299.9" r="3.1"/>
<circle cx="1236.4" cy="1305.2" r="3.1"/>
<circle cx="1239.2" cy="1300.2" r="3.1"/>
<circle cx="1235.4" cy="1327.2" r="3.1"/>
<circle cx="1236.7" cy="1324.2" r="3.1"/>
<circle cx="1237.6" cy="1321.7" r="3.1"/>
<circle cx="1236.0" cy="1295.4" r="3.1"/>
<circle cx="1238.2" cy="1308.7" r="3.1"/>
<circle cx="1237.2" cy="1317.2" r="3.1"/>
<circle cx="1238.2" cy="1300.6" r="3.1"/>
<circle cx="1236.2" cy="1327.5" r="3.1"/>
<circle cx="1237.0" cy="1301.1" r="3.1"/>
<circle cx="1237.6" cy="1299.9" r="3.1"/>
<circle cx="1238.3" cy="1290.7" r="3.1"/>
<circle cx="1238.5" cy="1312.8" r="3.1"/>
<circle cx="1236.2" cy="1328.5" r="3.1"/>
<circle cx="1235.7" cy="1299.2" r="3.1"/>
<circle cx="1234.7" cy="1312.0" r="3.1"/>
<circle cx="1238.2" cy="1317.5" r="3.1"/>
<circle cx="1236.5" cy="1322.9" r="3.1"/>
<circle cx="1235.0" cy="1301.9" r="3.1"/>
<circle cx="1237.6" cy="1329.6" r="3.1"/>
<circle cx="1237.6" cy="1318.1" r="3.1"/>
<circle cx="1238.3" cy="1305.6" r="3.1"/>
<circle cx="1239.1" cy="1320.2" r="3.1"/>
<circle cx="1236.1" cy="1305.5" r="3.1"/>
<circle cx="1238.4" cy="1303.7" r="3.1"/>
<circle cx="1235.3" cy="1325.6" r="3.1"/>
<circle cx="1245.6" cy="1310.9" r="3.1"/>
<circle cx="1246.4" cy="1326.9" r="3.1"/>
<circle cx="1243.2" cy="1303.2" r="3.1"/>
<circle cx="1242.8" cy="1306.4" r="3.1"/>
<circle cx="1245.4" cy="1324.8" r="3.1"/>
<circle cx="1246.4" cy="1313.3" r="3.1"/>
<circle cx="1244.8" cy="1313.1" r="3.1"/>
<circle cx="1244.0" cy="1324.5" r="3.1"/>
<circle cx="1247.1" cy="1324.2" r="3.1"/>
<circle cx="1243.3" cy="1317.2" r="3.1"/>
<circle cx="1246.9" cy="1310.0" r="3.1"/>
<circle cx="1247.8" cy="1326.8" r="3.1"/>
<circle cx="1246.9" cy="1323.5" r="3.1"/>
<circle cx="1246.3" cy="1325.9" r="3.1"/>
<circle cx="1243.2" cy="1318.6" r="3.1"/>
<circle cx="1246.6" cy="1314.7" r="3.1"/>
<circle cx="1244.1" cy="1291.8" r="3.1"/>
<circle cx="1246.0" cy="1323.6" r="3.1"/>
<circle cx="1253.1" cy="1297.9" r="3.1"/>
<circle cx="1252.9" cy="1292.9" r="3.1"/>
<circle cx="1254.7" cy="1329.9" r="3.1"/>
<circle cx="1255.2" cy="1304.1" r="3.1"/>
<circle cx="1254.8" cy="1292.0" r="3.1"/>
<circle cx="1255.4" cy="1302.7" r="3.1"/>
<circle cx="1252.0" cy="1315.4" r="3.1"/>
<circle cx="1252.6" cy="1300.6" r="3.1"/>
<circle cx="1252.2" cy="1307.7" r="3.1"/>
<circle cx="1254.2" cy="1322.9" r="3.1"/>
<circle cx="1252.2" cy="1323.8" r="3.1"/>
<circle cx="1252.4" cy="1298.4" r="3.1"/>
<circle cx="1254.5" cy="1303.3" r="3.1"/>
<circle cx="1253.3" cy="1312.9" r="3.1"/>
<circle cx="1252.9" cy="1322.3" r="3.1"/>
<circle cx="1252.8" cy="1324.3" r="3.1"/>
<circle cx="1255.2" cy="1311.6" r="3.1"/>
<circle cx="1252.1" cy="1321.7" r="3.1"/>
<circle cx="1252.1" cy="1310.2" r="3.1"/>
<circle cx="1253.7" cy="1291.6" r="3.1"/>
<circle cx="1254.5" cy="1319.4" r="3.1"/>
<circle cx="1254.3" cy="1305.8" r="3.1"/>
<circle cx="1254.0" cy="1313.7" r="3.1"/>
<circle cx="1252.9" cy="1325.4" r="3.1"/>
<circle cx="1256.0" cy="1322.8" r="3.1"/>
<circle cx="1255.8" cy="1302.8" r="3.1"/>
<circle cx="1255.9" cy="1292.0" r="3.1"/>
<circle cx="1253.9" cy="1294.6" r="3.1"/>
<circle cx="1253.8" cy="1317.7" r="3.1"/>
<circle cx="1254.8" cy="1308.1" r="3.1"/>
<circle cx="1253.4" cy="1297.0" r="3.1"/>
<circle cx="1253.6" cy="1300.9" r="3.1"/>
<circle cx="1252.8" cy="1319.9" r="3.1"/>
<circle cx="1254.1" cy="1307.4" r="3.1"/>
<circle cx="1252.8" cy="1318.6" r="3.1"/>
<circle cx="1252.8" cy="1300.2" r="3.1"/>
<circle cx="1254.2" cy="1318.5" r="3.1"/>
<circle cx="1255.9" cy="1320.4" r="3.1"/>
<circle cx="1255.8" cy="1327.6" r="3.1"/>
<circle cx="1254.9" cy="1319.2" r="3.1"/>
<circle cx="1252.3" cy="1297.6" r="3.1"/>
<circle cx="1252.1" cy="1325.3" r="3.1"/>
<circle cx="1254.9" cy="1315.5" r="3.1"/>
<circle cx="1253.1" cy="1303.9" r="3.1"/>
<circle cx="1252.7" cy="1315.6" r="3.1"/>
<circle cx="1256.0" cy="1301.8" r="3.1"/>
<circle cx="1252.2" cy="1296.4" r="3.1"/>
<circle cx="1253.4" cy="1326.8" r="3.1"/>
<circle cx="1255.2" cy="1308.1" r="3.1"/>
<circle cx="1252.4" cy="1293.5" r="3.1"/>
<circle cx="1264.9" cy="1321.7" r="3.1"/>
<circle cx="1266.2" cy="1330.6" r="3.1"/>
<circle cx="1267.9" cy="1322.4" r="3.1"/>
<circle cx="1266.2" cy="1323.5" r="3.1"/>
<circle cx="1264.8" cy="1293.6" r="3.1"/>
<circle cx="1266.6" cy="1310.3" r="3.1"/>
<circle cx="1273.8" cy="1299.6" r="3.1"/>
<circle cx="1273.1" cy="1327.2" r="3.1"/>
<circle cx="1275.8" cy="1328.7" r="3.1"/>
<circle cx="1276.9" cy="1307.3" r="3.1"/>
<circle cx="1275.9" cy="1305.1" r="3.1"/>
<circle cx="1301.1" cy="1324.3" r="3.1"/>
<circle cx="1299.8" cy="1289.5" r="3.1"/>
<circle cx="1309.4" cy="1313.6" r="3.1"/>
<circle cx="1309.8" cy="1289.4" r="3.1"/>
<circle cx="1358.8" cy="1322.0" r="3.1"/>
<circle cx="1357.4" cy="1290.8" r="3.1"/>
<circle cx="1359.1" cy="1311.4" r="3.1"/>
<circle cx="1365.3" cy="1302.6" r="3.1"/>
<circle cx="1367.5" cy="1326.2" r="3.1"/>
<circle cx="1366.9" cy="1315.9" r="3.1"/>
<circle cx="1374.4" cy="1299.2" r="3.1"/>
<circle cx="1377.2" cy="1305.1" r="3.1"/>
<circle cx="1374.0" cy="1313.8" r="3.1"/>
<circle cx="1374.1" cy="1297.4" r="3.1"/>
<circle cx="1384.8" cy="1313.6" r="3.1"/>
<circle cx="1385.5" cy="1318.7" r="3.1"/>
<circle cx="1384.8" cy="1291.8" r="3.1"/>
<circle cx="1385.9" cy="1291.3" r="3.1"/>
<circle cx="1384.9" cy="1305.8" r="3.1"/>
<circle cx="1394.3" cy="1319.0" r="3.1"/>
<circle cx="1392.6" cy="1316.3" r="3.1"/>
<circle cx="1394.4" cy="1308.8" r="3.1"/>
<circle cx="1401.6" cy="1327.2" r="3.1"/>
<circle cx="1403.4" cy="1291.6" r="3.1"/>
<circle cx="1402.0" cy="1330.4" r="3.1"/>
<circle cx="1401.9" cy="1305.5" r="3.1"/>
<circle cx="1404.2" cy="1323.6" r="3.1"/>
<circle cx="1403.5" cy="1320.1" r="3.1"/>
<circle cx="1422.1" cy="1292.9" r="3.1"/>
<circle cx="1424.0" cy="1322.7" r="3.1"/>
<circle cx="1437.2" cy="1291.0" r="3.1"/>
<circle cx="1438.0" cy="1328.1" r="3.1"/>
<circle cx="1437.9" cy="1317.2" r="3.1"/>
<circle cx="1440.7" cy="1315.8" r="3.1"/>
<circle cx="1457.8" cy="1300.0" r="3.1"/>
<circle cx="1451.6" cy="1289.8" r="3.1"/>
<circle cx="1456.5" cy="1293.4" r="3.1"/>
<circle cx="1458.2" cy="1318.8" r="3.1"/>
<circle cx="1451.9" cy="1322.9" r="3.1"/>
<circle cx="1451.7" cy="1310.5" r="3.1"/>
<circle cx="1451.2" cy="1322.1" r="3.1"/>
<circle cx="1457.5" cy="1327.5" r="3.1"/>
<circle cx="1450.4" cy="1324.8" r="3.1"/>
<circle cx="1454.8" cy="1323.5" r="3.1"/>
<circle cx="1471.5" cy="1315.0" r="3.1"/>
<circle cx="1471.9" cy="1322.6" r="3.1"/>
<circle cx="1469.8" cy="1291.3" r="3.1"/>
<circle cx="1471.7" cy="1301.2" r="3.1"/>
<circle cx="1471.1" cy="1289.3" r="3.1"/>
<circle cx="1472.5" cy="1290.0" r="3.1"/>
<circle cx="1487.8" cy="1323.1" r="3.1"/>
<circle cx="1485.5" cy="1294.1" r="3.1"/>
<circle cx="1486.7" cy="1297.7" r="3.1"/>
<circle cx="1485.4" cy="1293.6" r="3.1"/>
<circle cx="1488.7" cy="1311.9" r="3.1"/>
<circle cx="1484.9" cy="1292.9" r="3.1"/>
<circle cx="1487.2" cy="1324.7" r="3.1"/>
<circle cx="1487.9" cy="1293.3" r="3.1"/>
<circle cx="1497.5" cy="1301.7" r="3.1"/>
<circle cx="1499.0" cy="1295.2" r="3.1"/>
<circle cx="1498.4" cy="1330.1" r="3.1"/>
<circle cx="1499.1" cy="1289.3" r="3.1"/>
<circle cx="1496.3" cy="1293.8" r="3.1"/>
<circle cx="1498.8" cy="1314.1" r="3.1"/>
<circle cx="1498.1" cy="1308.1" r="3.1"/>
<circle cx="1523.4" cy="1314.7" r="3.1"/>
<circle cx="1524.4" cy="1327.5" r="3.1"/>
<circle cx="1524.7" cy="1322.5" r="3.1"/>
<circle cx="1525.5" cy="1324.2" r="3.1"/>
<circle cx="1524.7" cy="1290.3" r="3.1"/>
<circle cx="1552.8" cy="1324.7" r="3.1"/>
<circle cx="1550.8" cy="1325.9" r="3.1"/>
<circle cx="1548.8" cy="1328.6" r="3.1"/>
<circle cx="1550.9" cy="1318.7" r="3.1"/>
<circle cx="1549.4" cy="1301.6" r="3.1"/>
<circle cx="1550.2" cy="1302.6" r="3.1"/>
<circle cx="1548.2" cy="1307.6" r="3.1"/>
<circle cx="1577.9" cy="1316.5" r="3.1"/>
<circle cx="1577.7" cy="1321.0" r="3.1"/>
<circle cx="1577.3" cy="1330.8" r="3.1"/>
</g>
<g fill="#d9534f" fill-opacity="0.3" stroke="#d9534f" stroke-opacity="0.5" stroke-width="1.3">
<circle cx="1396.5" cy="1247.4" r="3.1"/>
<circle cx="1395.5" cy="1252.7" r="3.1"/>
<circle cx="1401.0" cy="1245.8" r="3.1"/>
<circle cx="1402.8" cy="1272.0" r="3.1"/>
<circle cx="1401.7" cy="1266.3" r="3.1"/>
</g>
<g stroke-width="1.3"><circle cx="464" cy="1426.3" r="3.1" fill="#e3862b" fill-opacity="0.3" stroke="#e3862b" stroke-opacity="0.6"/><circle cx="528" cy="1349.3" r="3.1" fill="#7a3be6" fill-opacity="0.3" stroke="#7a3be6" stroke-opacity="0.6"/><circle cx="887" cy="1304" r="3.1" fill="#44694a" fill-opacity="0.3" stroke="#44694a" stroke-opacity="0.6"/><circle cx="1485.8" cy="1350" r="3.1" fill="#7a3be6" fill-opacity="0.3" stroke="#7a3be6" stroke-opacity="0.6"/><circle cx="1485.8" cy="1356" r="3.1" fill="#7a3be6" fill-opacity="0.3" stroke="#7a3be6" stroke-opacity="0.6"/><circle cx="1485.8" cy="1375" r="3.1" fill="#7a3be6" fill-opacity="0.3" stroke="#7a3be6" stroke-opacity="0.6"/><circle cx="1553.6" cy="1352" r="3.1" fill="#7a3be6" fill-opacity="0.3" stroke="#7a3be6" stroke-opacity="0.6"/><circle cx="1553.6" cy="1356.5" r="3.1" fill="#7a3be6" fill-opacity="0.3" stroke="#7a3be6" stroke-opacity="0.6"/><circle cx="1553.6" cy="1371" r="3.1" fill="#7a3be6" fill-opacity="0.3" stroke="#7a3be6" stroke-opacity="0.6"/><circle cx="1447.2" cy="1396" r="3.1" fill="#e3862b" fill-opacity="0.3" stroke="#e3862b" stroke-opacity="0.6"/><circle cx="1447.2" cy="1422" r="3.1" fill="#e3862b" fill-opacity="0.3" stroke="#e3862b" stroke-opacity="0.6"/><circle cx="1447.2" cy="1433" r="3.1" fill="#e3862b" fill-opacity="0.3" stroke="#e3862b" stroke-opacity="0.6"/><circle cx="1514.9" cy="1398" r="3.1" fill="#e3862b" fill-opacity="0.3" stroke="#e3862b" stroke-opacity="0.6"/><circle cx="1514.9" cy="1429" r="3.1" fill="#e3862b" fill-opacity="0.3" stroke="#e3862b" stroke-opacity="0.6"/><circle cx="1514.9" cy="1431" r="3.1" fill="#e3862b" fill-opacity="0.3" stroke="#e3862b" stroke-opacity="0.6"/></g>
<g stroke="#333" stroke-width="2.1" fill="none"><line x1="557.9" y1="1467.5" x2="601.4" y2="1467.5"/><rect x="469.2" y="1440.9" width="88.7" height="52.7" fill="none"/><line x1="530" y1="1440.9" x2="530" y2="1493.6" stroke-width="3.8"/><line x1="672.8" y1="1414.8" x2="725.6" y2="1414.8"/><line x1="885.6" y1="1414.8" x2="1078.5" y2="1414.8"/><rect x="725.6" y="1388.8" width="160.0" height="52.6" fill="none"/><line x1="771.6" y1="1388.8" x2="771.6" y2="1441.4" stroke-width="3.8"/><line x1="733.6" y1="1362.8" x2="831.5" y2="1362.8"/><line x1="927.8" y1="1362.8" x2="1062.4" y2="1362.8"/><rect x="831.5" y="1336.2" width="96.3" height="52.6" fill="none"/><line x1="896" y1="1336.2" x2="896" y2="1388.8" stroke-width="3.8"/><line x1="1140" y1="1310.6" x2="1234.6" y2="1310.6"/><line x1="1440.6" y1="1310.6" x2="1575.1" y2="1310.6"/><rect x="1234.6" y="1284.6" width="206.0" height="52.3" fill="none"/><line x1="1253" y1="1284.6" x2="1253" y2="1336.9" stroke-width="3.8"/><rect x="1393.6" y="1231.4" width="10.4" height="53.2" fill="none"/><line x1="1398.8" y1="1231.4" x2="1398.8" y2="1284.6" stroke-width="3.8"/></g>
<g fill="#2b2b2b"><circle cx="464" cy="1415" r="4.6"/><circle cx="528" cy="1362.7" r="4.6"/><circle cx="887" cy="1310.5" r="4.6"/><circle cx="1075.6" cy="1362.8" r="4.6"/><circle cx="1096.6" cy="1362.8" r="4.6"/><circle cx="1117.8" cy="1362.8" r="4.6"/><circle cx="1485.8" cy="1362.9" r="4.6"/><circle cx="1553.6" cy="1362.9" r="4.6"/><circle cx="1447.2" cy="1414.8" r="4.6"/><circle cx="1514.9" cy="1414.8" r="4.6"/></g>
<rect x="177" y="1193" width="4.6" height="799" fill="#000"/>
<rect x="166" y="1569.2" width="13" height="4.6" fill="#000"/>
<rect x="166" y="1674.4" width="13" height="4.6" fill="#000"/>
<rect x="166" y="1778.7" width="13" height="4.6" fill="#000"/>
<rect x="1892" y="1193" width="4.6" height="799" fill="#000"/>
<rect x="1881" y="1229.5" width="13" height="4.6" fill="#000"/>
<rect x="1881" y="1416.6" width="13" height="4.6" fill="#000"/>
<rect x="1881" y="1603.9" width="13" height="4.6" fill="#000"/>
<rect x="1881" y="1791.6" width="13" height="4.6" fill="#000"/>
<rect x="1881" y="1978.3" width="13" height="4.6" fill="#000"/>
<rect x="1925" y="1231.8" width="186" height="214.9" fill="#c43a34"/>
<rect x="1925" y="1446.7" width="186" height="533.9" fill="#466646"/>
<rect x="2132" y="1231.8" width="185" height="702.9" fill="#c43a34"/>
<rect x="2132" y="1934.7" width="185" height="45.9" fill="#466646"/>
<rect x="2338" y="1231.8" width="185" height="738.5" fill="#c43a34"/>
<rect x="2338" y="1970.3" width="185" height="10.3" fill="#466646"/>
<rect x="2544" y="1231.8" width="186" height="739.2" fill="#c43a34"/>
<rect x="2544" y="1971" width="186" height="9.6" fill="#466646"/>
<rect x="2750" y="1231.8" width="186" height="748.8" fill="#c43a34"/>
<rect x="2957" y="1231.8" width="185" height="748.8" fill="#c43a34"/>
<rect x="3217" y="1595" width="47" height="30.5" fill="#c43a34"/>
<rect x="3217" y="1629.3" width="47" height="31.4" fill="#466646"/>
</svg>

<div class="t" style="left:23.3px;top:55.6px;font-size:42.14px;line-height:42.14px;letter-spacing:-0.93px;font-weight:normal;color:#ffffff;-webkit-text-stroke:0.4px #ffffff">COVID-19 Antibody Trajectory App</div>
<div class="t" style="left:742.0px;top:59.8px;font-size:33.29px;line-height:33.29px;letter-spacing:-1.08px;font-weight:normal;color:#ffffff;-webkit-text-stroke:0.4px #ffffff">Home</div>
<div class="t" style="left:859.0px;top:59.8px;font-size:33.29px;line-height:33.29px;letter-spacing:-1.05px;font-weight:normal;color:#5cb89d;-webkit-text-stroke:0.4px #5cb89d">Figures</div>
<div class="t" style="left:1028.0px;top:60.9px;font-size:32.06px;line-height:32.06px;letter-spacing:-1.20px;font-weight:normal;color:#ffffff;-webkit-text-stroke:0.4px #ffffff">Tables</div>
<div class="t" style="left:1180.0px;top:59.8px;font-size:33.29px;line-height:33.29px;letter-spacing:-0.17px;font-weight:normal;color:#ffffff;-webkit-text-stroke:0.4px #ffffff">About</div>
<div class="t" style="left:57.4px;top:228.8px;font-size:35.43px;line-height:35.43px;letter-spacing:-0.90px;font-weight:normal;color:#212529;-webkit-text-stroke:0.4px #212529">Cohort:</div>
<div class="t" style="left:83.6px;top:307.3px;font-size:35.29px;line-height:35.29px;letter-spacing:0.02px;font-weight:normal;color:#212529;-webkit-text-stroke:0.4px #212529">All</div>
<div class="t" style="left:1186.0px;top:230.1px;font-size:34.42px;line-height:34.42px;letter-spacing:-1.20px;font-weight:normal;color:#212529;-webkit-text-stroke:0.4px #212529">Serology test:</div>
<div class="t" style="left:1213.1px;top:309.0px;font-size:32.88px;line-height:32.88px;letter-spacing:-1.20px;font-weight:normal;color:#212529;-webkit-text-stroke:0.4px #212529">Serology RBD</div>
<div class="t" style="left:56.4px;top:413.6px;font-size:33.57px;line-height:33.57px;letter-spacing:-0.60px;font-weight:normal;color:#212529;-webkit-text-stroke:0.4px #212529">More controls for Figure 1A:</div>
<div class="t" style="left:1235.0px;top:413.0px;font-size:34.29px;line-height:34.29px;letter-spacing:-1.16px;font-weight:normal;color:#212529;-webkit-text-stroke:0.4px #212529">Show Vertical &amp; horizontal lines</div>
<div class="t" style="left:2365.0px;top:413.2px;font-size:34.06px;line-height:34.06px;letter-spacing:-1.20px;font-weight:normal;color:#212529;-webkit-text-stroke:0.4px #212529">Add boxplots for time to doses</div>
<div class="t" style="left:91.3px;top:527.3px;font-size:34.14px;line-height:34.14px;letter-spacing:-0.75px;font-weight:normal;color:#212529;-webkit-text-stroke:0.4px #212529">Plots stratified by:</div>
<div class="t" style="left:117.6px;top:605.0px;font-size:34.96px;line-height:34.96px;letter-spacing:-1.20px;font-weight:normal;color:#212529;-webkit-text-stroke:0.4px #212529">Cohort</div>
<div class="t" style="left:237.0px;top:606.5px;font-size:33.23px;line-height:33.23px;letter-spacing:-1.20px;font-weight:normal;color:#212529;-webkit-text-stroke:0.4px #212529">Age category</div>
<div class="t" style="left:438.1px;top:607.4px;font-size:32.14px;line-height:32.14px;letter-spacing:-3.65px;font-weight:normal;color:#212529;-webkit-text-stroke:0.4px #212529">Sex</div>
<div class="t" style="left:504.7px;top:605.2px;font-size:34.67px;line-height:34.67px;letter-spacing:-1.20px;font-weight:normal;color:#212529;-webkit-text-stroke:0.4px #212529">Pre-vaccine infection</div>
<div class="t" style="left:166.0px;top:807.7px;font-size:34.14px;line-height:34.14px;letter-spacing:-1.17px;font-weight:normal;color:#ffffff;-webkit-text-stroke:0.4px #ffffff">Update Plots</div>
<div class="t" style="left:1056.6px;top:935.1px;font-size:46.61px;line-height:46.61px;letter-spacing:-1.20px;font-weight:bold;color:#212529">Figure 1: Trends over time for Serology RBD showing All cohort</div>
<div class="t" style="left:1496.6px;top:1021.0px;font-size:32.86px;line-height:32.86px;letter-spacing:-0.65px;font-weight:normal;color:#212529;-webkit-text-stroke:0.4px #212529"># participants: 158 ; # visits: 743 ;</div>
<div class="t" style="left:744.2px;top:1130.6px;font-size:33.53px;line-height:33.53px;letter-spacing:0.00px;font-weight:bold;color:#000">Figure 1A: Overall trend</div>
<div class="t" style="left:2325.2px;top:1130.3px;font-size:33.66px;line-height:33.66px;letter-spacing:0.00px;font-weight:bold;color:#000">Figure 1B: Positivity rates</div>
<div class="t" style="left:247.6px;top:1247.6px;font-size:21.70px;line-height:21.70px;letter-spacing:0.00px;font-weight:normal;color:#c0392b">Time: Dose 1-5</div>
<div class="t" style="left:247.6px;top:1300.5px;font-size:21.56px;line-height:21.56px;letter-spacing:0.00px;font-weight:normal;color:#3f6b45">Time: Dose 1-4</div>
<div class="t" style="left:247.6px;top:1352.4px;font-size:21.70px;line-height:21.70px;letter-spacing:0.00px;font-weight:normal;color:#7d3ee0">Time: Dose 1-3</div>
<div class="t" style="left:247.6px;top:1404.6px;font-size:21.70px;line-height:21.70px;letter-spacing:0.00px;font-weight:normal;color:#e07b26">Time: Dose 2-3</div>
<div class="t" style="left:247.6px;top:1457.5px;font-size:21.70px;line-height:21.70px;letter-spacing:0.00px;font-weight:normal;color:#15304d">Time: Dose 1-2</div>
<div class="t" style="left:83.3px;top:1559.3px;font-size:26.68px;line-height:26.68px;letter-spacing:0.00px;font-weight:bold;color:#000">10,000</div>
<div class="t" style="left:120.0px;top:1664.6px;font-size:26.35px;line-height:26.35px;letter-spacing:0.00px;font-weight:bold;color:#000">100</div>
<div class="t" style="left:150.8px;top:1770.9px;font-size:23.46px;line-height:23.46px;letter-spacing:0.00px;font-weight:bold;color:#000">1</div>
<div class="t" style="left:1811.2px;top:1219.6px;font-size:26.20px;line-height:26.20px;letter-spacing:0.00px;font-weight:bold;color:#000">100%</div>
<div class="t" style="left:1825.5px;top:1406.5px;font-size:26.34px;line-height:26.34px;letter-spacing:-0.00px;font-weight:bold;color:#000">75%</div>
<div class="t" style="left:1826.6px;top:1594.3px;font-size:25.81px;line-height:25.81px;letter-spacing:0.00px;font-weight:bold;color:#000">50%</div>
<div class="t" style="left:1826.6px;top:1782.0px;font-size:25.81px;line-height:25.81px;letter-spacing:0.00px;font-weight:bold;color:#000">25%</div>
<div class="t" style="left:1841.0px;top:1968.7px;font-size:25.77px;line-height:25.77px;letter-spacing:0.00px;font-weight:bold;color:#000">0%</div>
<div class="t" style="left:3215.0px;top:1552.7px;font-size:28.06px;line-height:28.06px;letter-spacing:0.00px;font-weight:bold;color:#000">Serology RBD</div>
<div class="t" style="left:3279.1px;top:1600.8px;font-size:21.87px;line-height:21.87px;letter-spacing:0.00px;font-weight:normal;color:#000">Positive</div>
<div class="t" style="left:3279.1px;top:1635.4px;font-size:21.73px;line-height:21.73px;letter-spacing:0.00px;font-weight:normal;color:#000">Negative</div>
<div class="t" style="left:33.2px;top:1681.2px;font-size:30.23px;line-height:30.23px;letter-spacing:-1.54px;font-weight:bold;color:#000;transform-origin:0 0;transform:rotate(-90deg)">log BAU/ml</div>
<div class="t" style="left:1762.8px;top:1682.4px;font-size:28.49px;line-height:28.49px;letter-spacing:-0.30px;font-weight:bold;color:#000;transform-origin:0 0;transform:rotate(-90deg)">percent (%)</div>

<!-- cursor -->
<svg class="a" style="left:1000px;top:1130px" width="55" height="60" viewBox="0 0 55 60">
 <defs><filter id="cs" x="-50%" y="-50%" width="200%" height="200%"><feGaussianBlur stdDeviation="1.6"/></filter></defs>
 <g transform="translate(16.5,11.5) scale(1.13)">
 <path d="M0,0 L0.5,22 L5.5,17.3 L10.5,28.5 L13.8,27 L9,16.3 L16.2,16.3 Z" fill="#000" opacity="0.35" filter="url(#cs)" transform="translate(0.5,2)"/>
 <path d="M0,0 L0.5,22 L5.5,17.3 L10.5,28.5 L13.8,27 L9,16.3 L16.2,16.3 Z" fill="#000" stroke="#fff" stroke-width="3" stroke-linejoin="round"/>
 <path d="M0,0 L0.5,22 L5.5,17.3 L10.5,28.5 L13.8,27 L9,16.3 L16.2,16.3 Z" fill="#000"/>
 </g>
</svg>
<!-- pdf icon -->
<div class="a" style="left:3328px;top:1632px;width:72px;height:72px;border-radius:50%;background:rgba(255,255,255,0.45);box-shadow:0 3px 10px rgba(0,0,0,0.08)"></div>
<svg class="a" style="left:3318px;top:1622px" width="92" height="92" viewBox="3318 1622 92 92">
 <defs><linearGradient id="pg" x1="0" y1="0" x2="1" y2="0"><stop offset="0" stop-color="#e99a9a"/><stop offset="0.6" stop-color="#dba6d6"/><stop offset="1" stop-color="#c2aef5"/></linearGradient></defs>
 <circle cx="3364" cy="1667.7" r="35" fill="none" stroke="url(#pg)" stroke-width="1.8"/>
 <path d="M3366,1648 C3370,1650 3368,1660 3362,1670 C3358,1677 3352,1682 3349,1682.5 C3346,1682 3349,1677 3356,1674 C3364,1670 3374,1669 3381,1670.5 C3387,1672 3387,1676 3382,1675.5 C3376,1675 3370,1670 3366,1664 C3363,1658 3363,1650 3366,1648 Z" fill="none" stroke="#e29b98" stroke-width="2.6" stroke-linejoin="round"/>
</svg>
<!-- fab -->
<div class="a" style="left:3330px;top:1858px;width:96px;height:96px;border-radius:50%;background:#fff;box-shadow:0 6px 18px rgba(0,0,0,0.28)"></div>
<svg class="a" style="left:3355px;top:1883px" width="46" height="46" viewBox="3355 1883 46 46">
 <path d="M3363.8,1905.7 L3392,1905.7 M3377.9,1891.5 L3377.9,1919.5" stroke="#2a2a2a" stroke-width="4.5" stroke-linecap="round"/>
</svg>

</body></html>
